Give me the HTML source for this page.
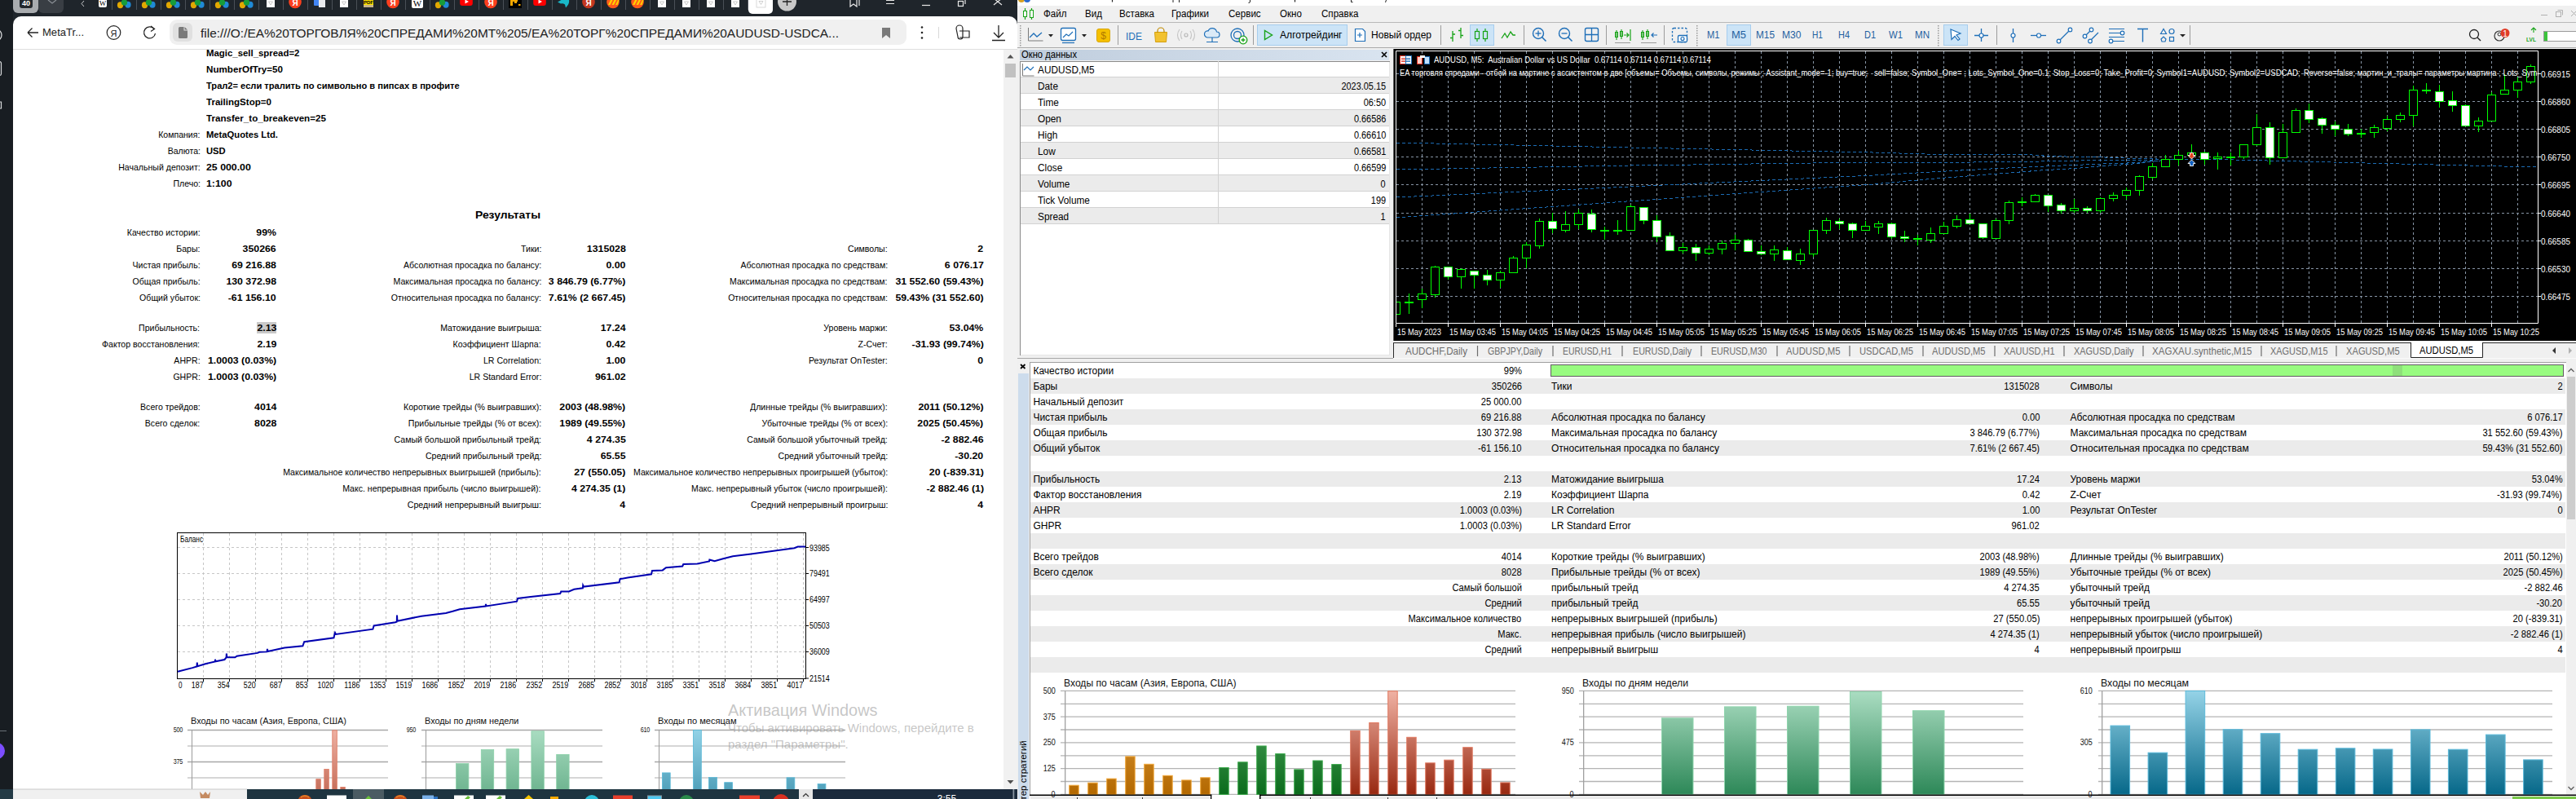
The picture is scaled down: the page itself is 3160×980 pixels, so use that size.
<!DOCTYPE html>
<html><head><meta charset="utf-8"><title>MetaTrader report</title>
<style>
html,body{margin:0;padding:0;}
body{width:3160px;height:980px;overflow:hidden;position:relative;background:#1f252b;font-family:"Liberation Sans",sans-serif;}
.t{position:absolute;white-space:pre;}
.r{position:absolute;}
svg{position:absolute;overflow:visible;}
</style></head><body>

<div class="r" style="left:0px;top:0px;width:16px;height:980px;background:#181d22;"></div>
<svg style="left:0;top:0" width="16" height="980"><circle cx="-5" cy="43" r="7" fill="none" stroke="#d8dadc" stroke-width="1.3"/><rect x="-9" y="75.5" width="10.5" height="17" rx="2" fill="none" stroke="#d8dadc" stroke-width="1.2"/><path d="M-4 116 v17 M-4 125 h5.5 v8 h-5.5" fill="none" stroke="#d8dadc" stroke-width="1.2"/><line x1="0" y1="896.5" x2="8" y2="896.5" stroke="#6a7077" stroke-width="1"/><circle cx="-4" cy="921" r="10" fill="#7b4dff"/></svg>
<svg style="left:0;top:0" width="1250" height="20"><rect x="16" y="-6" width="31" height="22" rx="6" fill="#a9acaf"/><rect x="24" y="-4" width="16" height="14" rx="3" fill="#23282d"/><text x="32" y="7" font-size="9" fill="#fff" text-anchor="middle" font-family="Liberation Sans" font-weight="bold">40</text><rect x="47" y="-6" width="31" height="22" rx="6" fill="#393e44"/><path d="M59 0 l5 4 l5 -4" fill="none" stroke="#8a8f95" stroke-width="1.2"/><path d="M103 1 l-3 3.5 l3 3.5" fill="none" stroke="#c8cacc" stroke-width="1"/><line x1="137.5" y1="0" x2="137.5" y2="12" stroke="#4a5057" stroke-width="1"/><line x1="167.5" y1="0" x2="167.5" y2="12" stroke="#4a5057" stroke-width="1"/><line x1="197.5" y1="0" x2="197.5" y2="12" stroke="#4a5057" stroke-width="1"/><line x1="227.5" y1="0" x2="227.5" y2="12" stroke="#4a5057" stroke-width="1"/><line x1="257.5" y1="0" x2="257.5" y2="12" stroke="#4a5057" stroke-width="1"/><line x1="287.5" y1="0" x2="287.5" y2="12" stroke="#4a5057" stroke-width="1"/><line x1="317.5" y1="0" x2="317.5" y2="12" stroke="#4a5057" stroke-width="1"/><line x1="347.5" y1="0" x2="347.5" y2="12" stroke="#4a5057" stroke-width="1"/><line x1="377.5" y1="0" x2="377.5" y2="12" stroke="#4a5057" stroke-width="1"/><line x1="407.5" y1="0" x2="407.5" y2="12" stroke="#4a5057" stroke-width="1"/><line x1="437.5" y1="0" x2="437.5" y2="12" stroke="#4a5057" stroke-width="1"/><line x1="467.5" y1="0" x2="467.5" y2="12" stroke="#4a5057" stroke-width="1"/><line x1="497.5" y1="0" x2="497.5" y2="12" stroke="#4a5057" stroke-width="1"/><line x1="527.5" y1="0" x2="527.5" y2="12" stroke="#4a5057" stroke-width="1"/><line x1="557.5" y1="0" x2="557.5" y2="12" stroke="#4a5057" stroke-width="1"/><line x1="587.5" y1="0" x2="587.5" y2="12" stroke="#4a5057" stroke-width="1"/><line x1="617.5" y1="0" x2="617.5" y2="12" stroke="#4a5057" stroke-width="1"/><line x1="647.5" y1="0" x2="647.5" y2="12" stroke="#4a5057" stroke-width="1"/><line x1="677.5" y1="0" x2="677.5" y2="12" stroke="#4a5057" stroke-width="1"/><line x1="707.5" y1="0" x2="707.5" y2="12" stroke="#4a5057" stroke-width="1"/><line x1="737.5" y1="0" x2="737.5" y2="12" stroke="#4a5057" stroke-width="1"/><line x1="767.5" y1="0" x2="767.5" y2="12" stroke="#4a5057" stroke-width="1"/><line x1="797.5" y1="0" x2="797.5" y2="12" stroke="#4a5057" stroke-width="1"/><line x1="827.5" y1="0" x2="827.5" y2="12" stroke="#4a5057" stroke-width="1"/><line x1="857.5" y1="0" x2="857.5" y2="12" stroke="#4a5057" stroke-width="1"/><line x1="887.5" y1="0" x2="887.5" y2="12" stroke="#4a5057" stroke-width="1"/><line x1="917.5" y1="0" x2="917.5" y2="12" stroke="#4a5057" stroke-width="1"/><rect x="121" y="-3" width="10" height="12" rx="2" fill="#fff"/><text x="126" y="7" font-size="9" fill="#000" text-anchor="middle" font-family="Liberation Serif">W</text><ellipse cx="147.5" cy="6.3" rx="3.6" ry="4" fill="#e2a800"/><ellipse cx="157" cy="5.8" rx="3.6" ry="4" fill="#1f8ad6"/><circle cx="152.5" cy="3" r="3.7" fill="#179c3a"/><ellipse cx="177.5" cy="6.3" rx="3.6" ry="4" fill="#e2a800"/><ellipse cx="187" cy="5.8" rx="3.6" ry="4" fill="#1f8ad6"/><circle cx="182.5" cy="3" r="3.7" fill="#179c3a"/><ellipse cx="207.5" cy="6.3" rx="3.6" ry="4" fill="#e2a800"/><ellipse cx="217" cy="5.8" rx="3.6" ry="4" fill="#1f8ad6"/><circle cx="212.5" cy="3" r="3.7" fill="#179c3a"/><ellipse cx="237.5" cy="6.3" rx="3.6" ry="4" fill="#e2a800"/><ellipse cx="247" cy="5.8" rx="3.6" ry="4" fill="#1f8ad6"/><circle cx="242.5" cy="3" r="3.7" fill="#179c3a"/><ellipse cx="267.5" cy="6.3" rx="3.6" ry="4" fill="#e2a800"/><ellipse cx="277" cy="5.8" rx="3.6" ry="4" fill="#1f8ad6"/><circle cx="272.5" cy="3" r="3.7" fill="#179c3a"/><ellipse cx="297.5" cy="6.3" rx="3.6" ry="4" fill="#e2a800"/><ellipse cx="307" cy="5.8" rx="3.6" ry="4" fill="#1f8ad6"/><circle cx="302.5" cy="3" r="3.7" fill="#179c3a"/><rect x="327" y="-2" width="10" height="11" fill="#fff"/><path d="M329.5 2 l2.5 4 l2.5 -4 z" fill="none" stroke="#bbb" stroke-width="0.8"/><circle cx="362" cy="2.5" r="7.8" fill="#fc3f1d" opacity="1"/><text x="362" y="7" font-size="10" fill="#fff" text-anchor="middle" font-family="Liberation Sans" font-weight="bold">Я</text><rect x="385" y="-3" width="9" height="10" rx="1" fill="#4285f4"/><rect x="391" y="0" width="8" height="9" fill="#e8eaed"/><rect x="417" y="-2" width="10" height="11" fill="#fff"/><path d="M419.5 2 l2.5 4 l2.5 -4 z" fill="none" stroke="#bbb" stroke-width="0.8"/><rect x="446" y="-2" width="12" height="10" fill="#ffe100"/><rect x="446" y="6" width="12" height="3" fill="#c9b68a"/><text x="452" y="5" font-size="6" fill="#000" text-anchor="middle" font-family="Liberation Sans" font-weight="bold">PDF</text><circle cx="482" cy="2.5" r="7.8" fill="#fc3f1d" opacity="1"/><text x="482" y="7" font-size="10" fill="#fff" text-anchor="middle" font-family="Liberation Sans" font-weight="bold">Я</text><rect x="505" y="-3" width="14" height="13" rx="2" fill="#fff"/><text x="512" y="7.5" font-size="11" fill="#000" text-anchor="middle" font-family="Liberation Serif">W</text><ellipse cx="537.5" cy="6.3" rx="3.6" ry="4" fill="#e2a800"/><ellipse cx="547" cy="5.8" rx="3.6" ry="4" fill="#1f8ad6"/><circle cx="542.5" cy="3" r="3.7" fill="#179c3a"/><rect x="564.2" y="-4" width="15.6" height="11" rx="3" fill="#f00"/><path d="M570.5 -0.5 l4.5 2.5 l-4.5 2.5 z" fill="#fff"/><circle cx="602" cy="2.5" r="7.8" fill="#fc3f1d" opacity="1"/><text x="602" y="7" font-size="10" fill="#fff" text-anchor="middle" font-family="Liberation Sans" font-weight="bold">Я</text><rect x="624" y="-3" width="16" height="13" fill="#000"/><path d="M626 7 v-9 h9 v4 h-1 v2 h-3 v-2 h-2 v5 z" fill="#f5a800"/><rect x="636" y="5" width="2.5" height="2" fill="#f5a800"/><rect x="654.2" y="-4" width="15.6" height="11" rx="3" fill="#f00"/><path d="M660.5 -0.5 l4.5 2.5 l-4.5 2.5 z" fill="#fff"/><path d="M684 2.5 q5 -3 8 -4 q4 -4 8 -2 l-2 4 q1 4 -4 9 l-1 -4 q-3 -2 -5 -1 z" fill="#19b8c9"/><circle cx="722" cy="2.5" r="7.8" fill="#fc3f1d" opacity="0.75"/><text x="722" y="7" font-size="10" fill="#fff" text-anchor="middle" font-family="Liberation Sans" font-weight="bold">Я</text><circle cx="752" cy="2.5" r="7.8" fill="#ff5a1a"/><path d="M746 6 l4 -8 h2.5 l-4 8 z M750.5 6 l4 -8 h2.5 l-4 8 z M755 6 l3 -6 h1.5 l-2 6 z" fill="#ffd200"/><circle cx="782" cy="2.5" r="7.8" fill="#ff5a1a"/><path d="M776 6 l4 -8 h2.5 l-4 8 z M780.5 6 l4 -8 h2.5 l-4 8 z M785 6 l3 -6 h1.5 l-2 6 z" fill="#ffd200"/><rect x="807" y="-2" width="10" height="11" fill="#fff"/><path d="M809.5 2 l2.5 4 l2.5 -4 z" fill="none" stroke="#bbb" stroke-width="0.8"/><rect x="837" y="-2" width="10" height="11" fill="#fff"/><path d="M839.5 2 l2.5 4 l2.5 -4 z" fill="none" stroke="#bbb" stroke-width="0.8"/><rect x="867" y="-2" width="10" height="11" fill="#fff"/><path d="M869.5 2 l2.5 4 l2.5 -4 z" fill="none" stroke="#bbb" stroke-width="0.8"/><rect x="897" y="-2" width="10" height="11" fill="#fff"/><path d="M899.5 2 l2.5 4 l2.5 -4 z" fill="none" stroke="#bbb" stroke-width="0.8"/><path d="M918 -2 h30 v14 a5 5 0 0 1 -5 5 h-20 a5 5 0 0 1 -5 -5 z" fill="#fff"/><rect x="928" y="-2" width="11" height="11" fill="none" stroke="#d0d0d0" stroke-width="0.8"/><path d="M931 1.5 l2.5 4 l2.5 -4 z" fill="none" stroke="#c4c4c4" stroke-width="0.8"/><circle cx="965.5" cy="2" r="11.5" fill="#c8c8c8"/><path d="M960 2 h11 M965.5 -3 v10" stroke="#222" stroke-width="1.3"/><path d="M1043 -1 v9 l4 -3 l4 3 v-9 M1051 -1 h3 v8" fill="none" stroke="#e8e8e8" stroke-width="1.2"/><path d="M1087 0.5 h10 M1087 4.5 h10" stroke="#e8e8e8" stroke-width="1.2"/><path d="M1131 6.5 h10" stroke="#e8e8e8" stroke-width="1.2"/><rect x="1175.5" y="1.5" width="6" height="6" fill="none" stroke="#e8e8e8" stroke-width="1.2"/><path d="M1178 -1 h6 v6" fill="none" stroke="#e8e8e8" stroke-width="1.2"/><path d="M1219 -2 l10 8 M1229 -2 l-10 8" stroke="#e8e8e8" stroke-width="1.2"/></svg>
<div class="r" style="left:16px;top:20px;width:1232px;height:948px;background:#fff;border-radius:10px 10px 0 0;"></div>
<div class="r" style="left:16px;top:60px;width:1232px;height:1px;background:#dedede;"></div>
<svg style="left:0;top:20" width="1250" height="40"><path d="M34 20 h13 M34 20 l5.5 -5.5 M34 20 l5.5 5.5" fill="none" stroke="#222" stroke-width="1.3"/><circle cx="139.5" cy="20" r="8.3" fill="none" stroke="#222" stroke-width="1.2"/><text x="139.5" y="24.5" font-size="11" fill="#222" text-anchor="middle" font-family="Liberation Sans">Я</text><path d="M189 15.5 A7 7 0 1 0 190.5 21" fill="none" stroke="#222" stroke-width="1.3"/><path d="M185 12 l4.5 3.5 l-4.5 3" fill="none" stroke="#222" stroke-width="1.3"/><rect x="208" y="4" width="904" height="31" rx="9" fill="#f0f0f0"/><rect x="212" y="8" width="24" height="23" rx="6" fill="#e0e0e0"/><path d="M220.5 13 h5 v4.5 h4.5 v8 a1.5 1.5 0 0 1 -1.5 1.5 h-8 a1.5 1.5 0 0 1 -1.5 -1.5 v-11 a1.5 1.5 0 0 1 1.5 -1.5 z M226.5 13 l3.5 3.5 h-3.5 z" fill="#7a7a7a"/><path d="M1082 14 h10 v13 l-5 -4 l-5 4 z" fill="#7a7a7a"/><circle cx="1131" cy="13.5" r="1.3" fill="#222"/><circle cx="1131" cy="20" r="1.3" fill="#222"/><circle cx="1131" cy="26.5" r="1.3" fill="#222"/><line x1="1151.5" y1="13" x2="1151.5" y2="27" stroke="#d8d8d8"/><path d="M1173 15 a4 4 0 0 1 8 0 v10 a3 3 0 0 1 -6 0 z M1177 18 h12 v8 h-12" fill="none" stroke="#222" stroke-width="1.2"/><path d="M1225 11 v15 M1219 20 l6 6 l6 -6 M1217 29.5 h16" fill="none" stroke="#222" stroke-width="1.3"/></svg>
<div class="t" style="font-size:13px;line-height:18px;top:31.0px;color:#222;left:52.0px;transform:scaleX(1.0040);transform-origin:0 50%;">MetaTr...</div>
<div class="t" style="font-size:15px;line-height:21px;top:29.5px;color:#222;left:246.0px;transform:scaleX(1.0281);transform-origin:0 50%;">file:///O:/EA%20ТОРГОВЛЯ%20СПРЕДАМИ%20МТ%205/EA%20ТОРГ%20СПРЕДАМИ%20AUDUSD-USDCA...</div>
<div class="t" style="font-size:11px;line-height:16px;top:57.0px;color:#000;font-weight:bold;left:253.0px;transform:scaleX(1.0366);transform-origin:0 50%;">Magic_sell_spread=2</div>
<div class="t" style="font-size:11px;line-height:16px;top:77.0px;color:#000;font-weight:bold;left:253.0px;transform:scaleX(1.0566);transform-origin:0 50%;">NumberOfTry=50</div>
<div class="t" style="font-size:11px;line-height:16px;top:97.0px;color:#000;font-weight:bold;left:253.0px;transform:scaleX(1.0095);transform-origin:0 50%;">Трал2= если тралить по символьно в пипсах в профите</div>
<div class="t" style="font-size:11px;line-height:16px;top:117.0px;color:#000;font-weight:bold;left:253.0px;transform:scaleX(1.0509);transform-origin:0 50%;">TrailingStop=0</div>
<div class="t" style="font-size:11px;line-height:16px;top:137.0px;color:#000;font-weight:bold;left:253.0px;transform:scaleX(1.0561);transform-origin:0 50%;">Transfer_to_breakeven=25</div>
<div class="t" style="font-size:11px;line-height:16px;top:157.0px;color:#000;right:2914.5px;transform:scaleX(0.9600);transform-origin:100% 50%;">Компания:</div>
<div class="t" style="font-size:11px;line-height:16px;top:157.0px;color:#000;font-weight:bold;left:253.0px;transform:scaleX(1.0200);transform-origin:0 50%;">MetaQuotes Ltd.</div>
<div class="t" style="font-size:11px;line-height:16px;top:177.0px;color:#000;right:2914.5px;transform:scaleX(0.9600);transform-origin:100% 50%;">Валюта:</div>
<div class="t" style="font-size:11px;line-height:16px;top:177.0px;color:#000;font-weight:bold;left:253.0px;transform:scaleX(1.0200);transform-origin:0 50%;">USD</div>
<div class="t" style="font-size:11px;line-height:16px;top:197.0px;color:#000;right:2914.5px;transform:scaleX(0.9600);transform-origin:100% 50%;">Начальный депозит:</div>
<div class="t" style="font-size:11px;line-height:16px;top:197.0px;color:#000;font-weight:bold;left:253.0px;transform:scaleX(1.1200);transform-origin:0 50%;">25 000.00</div>
<div class="t" style="font-size:11px;line-height:16px;top:217.0px;color:#000;right:2914.5px;transform:scaleX(0.9600);transform-origin:100% 50%;">Плечо:</div>
<div class="t" style="font-size:11px;line-height:16px;top:217.0px;color:#000;font-weight:bold;left:253.0px;transform:scaleX(1.1200);transform-origin:0 50%;">1:100</div>
<div class="t" style="font-size:13px;line-height:18px;top:255.0px;color:#000;font-weight:bold;left:-377.0px;width:2000px;text-align:center;transform:scaleX(1.0673);">Результаты</div>
<div class="r" style="left:315px;top:395px;width:24px;height:14px;background:#c9c9c9;"></div>
<div class="t" style="font-size:11px;line-height:16px;top:277.0px;color:#000;right:2914.5px;transform:scaleX(0.9600);transform-origin:100% 50%;">Качество истории:</div>
<div class="t" style="font-size:11px;line-height:16px;top:277.0px;color:#000;font-weight:bold;right:2821.0px;transform:scaleX(1.1200);transform-origin:100% 50%;">99%</div>
<div class="t" style="font-size:11px;line-height:16px;top:297.0px;color:#000;right:2914.5px;transform:scaleX(0.9600);transform-origin:100% 50%;">Бары:</div>
<div class="t" style="font-size:11px;line-height:16px;top:297.0px;color:#000;font-weight:bold;right:2821.0px;transform:scaleX(1.1200);transform-origin:100% 50%;">350266</div>
<div class="t" style="font-size:11px;line-height:16px;top:297.0px;color:#000;right:2496.0px;transform:scaleX(0.9600);transform-origin:100% 50%;">Тики:</div>
<div class="t" style="font-size:11px;line-height:16px;top:297.0px;color:#000;font-weight:bold;right:2392.5px;transform:scaleX(1.1200);transform-origin:100% 50%;">1315028</div>
<div class="t" style="font-size:11px;line-height:16px;top:297.0px;color:#000;right:2071.0px;transform:scaleX(0.9600);transform-origin:100% 50%;">Символы:</div>
<div class="t" style="font-size:11px;line-height:16px;top:297.0px;color:#000;font-weight:bold;right:1953.5px;transform:scaleX(1.1200);transform-origin:100% 50%;">2</div>
<div class="t" style="font-size:11px;line-height:16px;top:317.0px;color:#000;right:2914.5px;transform:scaleX(0.9600);transform-origin:100% 50%;">Чистая прибыль:</div>
<div class="t" style="font-size:11px;line-height:16px;top:317.0px;color:#000;font-weight:bold;right:2821.0px;transform:scaleX(1.1200);transform-origin:100% 50%;">69 216.88</div>
<div class="t" style="font-size:11px;line-height:16px;top:317.0px;color:#000;right:2496.0px;transform:scaleX(0.9600);transform-origin:100% 50%;">Абсолютная просадка по балансу:</div>
<div class="t" style="font-size:11px;line-height:16px;top:317.0px;color:#000;font-weight:bold;right:2392.5px;transform:scaleX(1.1200);transform-origin:100% 50%;">0.00</div>
<div class="t" style="font-size:11px;line-height:16px;top:317.0px;color:#000;right:2071.0px;transform:scaleX(0.9600);transform-origin:100% 50%;">Абсолютная просадка по средствам:</div>
<div class="t" style="font-size:11px;line-height:16px;top:317.0px;color:#000;font-weight:bold;right:1953.5px;transform:scaleX(1.1200);transform-origin:100% 50%;">6 076.17</div>
<div class="t" style="font-size:11px;line-height:16px;top:337.0px;color:#000;right:2914.5px;transform:scaleX(0.9600);transform-origin:100% 50%;">Общая прибыль:</div>
<div class="t" style="font-size:11px;line-height:16px;top:337.0px;color:#000;font-weight:bold;right:2821.0px;transform:scaleX(1.1200);transform-origin:100% 50%;">130 372.98</div>
<div class="t" style="font-size:11px;line-height:16px;top:337.0px;color:#000;right:2496.0px;transform:scaleX(0.9600);transform-origin:100% 50%;">Максимальная просадка по балансу:</div>
<div class="t" style="font-size:11px;line-height:16px;top:337.0px;color:#000;font-weight:bold;right:2392.5px;transform:scaleX(1.1200);transform-origin:100% 50%;">3 846.79 (6.77%)</div>
<div class="t" style="font-size:11px;line-height:16px;top:337.0px;color:#000;right:2071.0px;transform:scaleX(0.9600);transform-origin:100% 50%;">Максимальная просадка по средствам:</div>
<div class="t" style="font-size:11px;line-height:16px;top:337.0px;color:#000;font-weight:bold;right:1953.5px;transform:scaleX(1.1200);transform-origin:100% 50%;">31 552.60 (59.43%)</div>
<div class="t" style="font-size:11px;line-height:16px;top:357.0px;color:#000;right:2914.5px;transform:scaleX(0.9600);transform-origin:100% 50%;">Общий убыток:</div>
<div class="t" style="font-size:11px;line-height:16px;top:357.0px;color:#000;font-weight:bold;right:2821.0px;transform:scaleX(1.1200);transform-origin:100% 50%;">-61 156.10</div>
<div class="t" style="font-size:11px;line-height:16px;top:357.0px;color:#000;right:2496.0px;transform:scaleX(0.9600);transform-origin:100% 50%;">Относительная просадка по балансу:</div>
<div class="t" style="font-size:11px;line-height:16px;top:357.0px;color:#000;font-weight:bold;right:2392.5px;transform:scaleX(1.1200);transform-origin:100% 50%;">7.61% (2 667.45)</div>
<div class="t" style="font-size:11px;line-height:16px;top:357.0px;color:#000;right:2071.0px;transform:scaleX(0.9600);transform-origin:100% 50%;">Относительная просадка по средствам:</div>
<div class="t" style="font-size:11px;line-height:16px;top:357.0px;color:#000;font-weight:bold;right:1953.5px;transform:scaleX(1.1200);transform-origin:100% 50%;">59.43% (31 552.60)</div>
<div class="t" style="font-size:11px;line-height:16px;top:394.0px;color:#000;right:2914.5px;transform:scaleX(0.9600);transform-origin:100% 50%;">Прибыльность:</div>
<div class="t" style="font-size:11px;line-height:16px;top:394.0px;color:#000;font-weight:bold;right:2821.0px;transform:scaleX(1.1200);transform-origin:100% 50%;">2.13</div>
<div class="t" style="font-size:11px;line-height:16px;top:394.0px;color:#000;right:2496.0px;transform:scaleX(0.9600);transform-origin:100% 50%;">Матожидание выигрыша:</div>
<div class="t" style="font-size:11px;line-height:16px;top:394.0px;color:#000;font-weight:bold;right:2392.5px;transform:scaleX(1.1200);transform-origin:100% 50%;">17.24</div>
<div class="t" style="font-size:11px;line-height:16px;top:394.0px;color:#000;right:2071.0px;transform:scaleX(0.9600);transform-origin:100% 50%;">Уровень маржи:</div>
<div class="t" style="font-size:11px;line-height:16px;top:394.0px;color:#000;font-weight:bold;right:1953.5px;transform:scaleX(1.1200);transform-origin:100% 50%;">53.04%</div>
<div class="t" style="font-size:11px;line-height:16px;top:414.0px;color:#000;right:2914.5px;transform:scaleX(0.9600);transform-origin:100% 50%;">Фактор восстановления:</div>
<div class="t" style="font-size:11px;line-height:16px;top:414.0px;color:#000;font-weight:bold;right:2821.0px;transform:scaleX(1.1200);transform-origin:100% 50%;">2.19</div>
<div class="t" style="font-size:11px;line-height:16px;top:414.0px;color:#000;right:2496.0px;transform:scaleX(0.9600);transform-origin:100% 50%;">Коэффициент Шарпа:</div>
<div class="t" style="font-size:11px;line-height:16px;top:414.0px;color:#000;font-weight:bold;right:2392.5px;transform:scaleX(1.1200);transform-origin:100% 50%;">0.42</div>
<div class="t" style="font-size:11px;line-height:16px;top:414.0px;color:#000;right:2071.0px;transform:scaleX(0.9600);transform-origin:100% 50%;">Z-Счет:</div>
<div class="t" style="font-size:11px;line-height:16px;top:414.0px;color:#000;font-weight:bold;right:1953.5px;transform:scaleX(1.1200);transform-origin:100% 50%;">-31.93 (99.74%)</div>
<div class="t" style="font-size:11px;line-height:16px;top:434.0px;color:#000;right:2914.5px;transform:scaleX(0.9600);transform-origin:100% 50%;">AHPR:</div>
<div class="t" style="font-size:11px;line-height:16px;top:434.0px;color:#000;font-weight:bold;right:2821.0px;transform:scaleX(1.1200);transform-origin:100% 50%;">1.0003 (0.03%)</div>
<div class="t" style="font-size:11px;line-height:16px;top:434.0px;color:#000;right:2496.0px;transform:scaleX(0.9600);transform-origin:100% 50%;">LR Correlation:</div>
<div class="t" style="font-size:11px;line-height:16px;top:434.0px;color:#000;font-weight:bold;right:2392.5px;transform:scaleX(1.1200);transform-origin:100% 50%;">1.00</div>
<div class="t" style="font-size:11px;line-height:16px;top:434.0px;color:#000;right:2071.0px;transform:scaleX(0.9600);transform-origin:100% 50%;">Результат OnTester:</div>
<div class="t" style="font-size:11px;line-height:16px;top:434.0px;color:#000;font-weight:bold;right:1953.5px;transform:scaleX(1.1200);transform-origin:100% 50%;">0</div>
<div class="t" style="font-size:11px;line-height:16px;top:454.0px;color:#000;right:2914.5px;transform:scaleX(0.9600);transform-origin:100% 50%;">GHPR:</div>
<div class="t" style="font-size:11px;line-height:16px;top:454.0px;color:#000;font-weight:bold;right:2821.0px;transform:scaleX(1.1200);transform-origin:100% 50%;">1.0003 (0.03%)</div>
<div class="t" style="font-size:11px;line-height:16px;top:454.0px;color:#000;right:2496.0px;transform:scaleX(0.9600);transform-origin:100% 50%;">LR Standard Error:</div>
<div class="t" style="font-size:11px;line-height:16px;top:454.0px;color:#000;font-weight:bold;right:2392.5px;transform:scaleX(1.1200);transform-origin:100% 50%;">961.02</div>
<div class="t" style="font-size:11px;line-height:16px;top:491.0px;color:#000;right:2914.5px;transform:scaleX(0.9600);transform-origin:100% 50%;">Всего трейдов:</div>
<div class="t" style="font-size:11px;line-height:16px;top:491.0px;color:#000;font-weight:bold;right:2821.0px;transform:scaleX(1.1200);transform-origin:100% 50%;">4014</div>
<div class="t" style="font-size:11px;line-height:16px;top:491.0px;color:#000;right:2496.0px;transform:scaleX(0.9600);transform-origin:100% 50%;">Короткие трейды (% выигравших):</div>
<div class="t" style="font-size:11px;line-height:16px;top:491.0px;color:#000;font-weight:bold;right:2392.5px;transform:scaleX(1.1200);transform-origin:100% 50%;">2003 (48.98%)</div>
<div class="t" style="font-size:11px;line-height:16px;top:491.0px;color:#000;right:2071.0px;transform:scaleX(0.9600);transform-origin:100% 50%;">Длинные трейды (% выигравших):</div>
<div class="t" style="font-size:11px;line-height:16px;top:491.0px;color:#000;font-weight:bold;right:1953.5px;transform:scaleX(1.1200);transform-origin:100% 50%;">2011 (50.12%)</div>
<div class="t" style="font-size:11px;line-height:16px;top:511.0px;color:#000;right:2914.5px;transform:scaleX(0.9600);transform-origin:100% 50%;">Всего сделок:</div>
<div class="t" style="font-size:11px;line-height:16px;top:511.0px;color:#000;font-weight:bold;right:2821.0px;transform:scaleX(1.1200);transform-origin:100% 50%;">8028</div>
<div class="t" style="font-size:11px;line-height:16px;top:511.0px;color:#000;right:2496.0px;transform:scaleX(0.9600);transform-origin:100% 50%;">Прибыльные трейды (% от всех):</div>
<div class="t" style="font-size:11px;line-height:16px;top:511.0px;color:#000;font-weight:bold;right:2392.5px;transform:scaleX(1.1200);transform-origin:100% 50%;">1989 (49.55%)</div>
<div class="t" style="font-size:11px;line-height:16px;top:511.0px;color:#000;right:2071.0px;transform:scaleX(0.9600);transform-origin:100% 50%;">Убыточные трейды (% от всех):</div>
<div class="t" style="font-size:11px;line-height:16px;top:511.0px;color:#000;font-weight:bold;right:1953.5px;transform:scaleX(1.1200);transform-origin:100% 50%;">2025 (50.45%)</div>
<div class="t" style="font-size:11px;line-height:16px;top:531.0px;color:#000;right:2496.0px;transform:scaleX(0.9600);transform-origin:100% 50%;">Самый большой прибыльный трейд:</div>
<div class="t" style="font-size:11px;line-height:16px;top:531.0px;color:#000;font-weight:bold;right:2392.5px;transform:scaleX(1.1200);transform-origin:100% 50%;">4 274.35</div>
<div class="t" style="font-size:11px;line-height:16px;top:531.0px;color:#000;right:2071.0px;transform:scaleX(0.9600);transform-origin:100% 50%;">Самый большой убыточный трейд:</div>
<div class="t" style="font-size:11px;line-height:16px;top:531.0px;color:#000;font-weight:bold;right:1953.5px;transform:scaleX(1.1200);transform-origin:100% 50%;">-2 882.46</div>
<div class="t" style="font-size:11px;line-height:16px;top:551.0px;color:#000;right:2496.0px;transform:scaleX(0.9600);transform-origin:100% 50%;">Средний прибыльный трейд:</div>
<div class="t" style="font-size:11px;line-height:16px;top:551.0px;color:#000;font-weight:bold;right:2392.5px;transform:scaleX(1.1200);transform-origin:100% 50%;">65.55</div>
<div class="t" style="font-size:11px;line-height:16px;top:551.0px;color:#000;right:2071.0px;transform:scaleX(0.9600);transform-origin:100% 50%;">Средний убыточный трейд:</div>
<div class="t" style="font-size:11px;line-height:16px;top:551.0px;color:#000;font-weight:bold;right:1953.5px;transform:scaleX(1.1200);transform-origin:100% 50%;">-30.20</div>
<div class="t" style="font-size:11px;line-height:16px;top:571.0px;color:#000;right:2496.0px;transform:scaleX(0.9600);transform-origin:100% 50%;">Максимальное количество непрерывных выигрышей (прибыль):</div>
<div class="t" style="font-size:11px;line-height:16px;top:571.0px;color:#000;font-weight:bold;right:2392.5px;transform:scaleX(1.1200);transform-origin:100% 50%;">27 (550.05)</div>
<div class="t" style="font-size:11px;line-height:16px;top:571.0px;color:#000;right:2071.0px;transform:scaleX(0.9600);transform-origin:100% 50%;">Максимальное количество непрерывных проигрышей (убыток):</div>
<div class="t" style="font-size:11px;line-height:16px;top:571.0px;color:#000;font-weight:bold;right:1953.5px;transform:scaleX(1.1200);transform-origin:100% 50%;">20 (-839.31)</div>
<div class="t" style="font-size:11px;line-height:16px;top:591.0px;color:#000;right:2496.0px;transform:scaleX(0.9600);transform-origin:100% 50%;">Макс. непрерывная прибыль (число выигрышей):</div>
<div class="t" style="font-size:11px;line-height:16px;top:591.0px;color:#000;font-weight:bold;right:2392.5px;transform:scaleX(1.1200);transform-origin:100% 50%;">4 274.35 (1)</div>
<div class="t" style="font-size:11px;line-height:16px;top:591.0px;color:#000;right:2071.0px;transform:scaleX(0.9600);transform-origin:100% 50%;">Макс. непрерывный убыток (число проигрышей):</div>
<div class="t" style="font-size:11px;line-height:16px;top:591.0px;color:#000;font-weight:bold;right:1953.5px;transform:scaleX(1.1200);transform-origin:100% 50%;">-2 882.46 (1)</div>
<div class="t" style="font-size:11px;line-height:16px;top:611.0px;color:#000;right:2496.0px;transform:scaleX(0.9600);transform-origin:100% 50%;">Средний непрерывный выигрыш:</div>
<div class="t" style="font-size:11px;line-height:16px;top:611.0px;color:#000;font-weight:bold;right:2392.5px;transform:scaleX(1.1200);transform-origin:100% 50%;">4</div>
<div class="t" style="font-size:11px;line-height:16px;top:611.0px;color:#000;right:2071.0px;transform:scaleX(0.9600);transform-origin:100% 50%;">Средний непрерывный проигрыш:</div>
<div class="t" style="font-size:11px;line-height:16px;top:611.0px;color:#000;font-weight:bold;right:1953.5px;transform:scaleX(1.1200);transform-origin:100% 50%;">4</div>
<svg style="left:0;top:0" width="1250" height="980"><rect x="217.5" y="653.5" width="771" height="179" fill="#fff" stroke="#000" stroke-width="1"/><line x1="249.5" y1="654" x2="249.5" y2="832" stroke="#c6c6c6" stroke-width="1" stroke-dasharray="3,3"/><line x1="249.5" y1="833" x2="249.5" y2="836" stroke="#000" stroke-width="1"/><line x1="281.5" y1="654" x2="281.5" y2="832" stroke="#c6c6c6" stroke-width="1" stroke-dasharray="3,3"/><line x1="281.5" y1="833" x2="281.5" y2="836" stroke="#000" stroke-width="1"/><line x1="313.5" y1="654" x2="313.5" y2="832" stroke="#c6c6c6" stroke-width="1" stroke-dasharray="3,3"/><line x1="313.5" y1="833" x2="313.5" y2="836" stroke="#000" stroke-width="1"/><line x1="345.5" y1="654" x2="345.5" y2="832" stroke="#c6c6c6" stroke-width="1" stroke-dasharray="3,3"/><line x1="345.5" y1="833" x2="345.5" y2="836" stroke="#000" stroke-width="1"/><line x1="377.5" y1="654" x2="377.5" y2="832" stroke="#c6c6c6" stroke-width="1" stroke-dasharray="3,3"/><line x1="377.5" y1="833" x2="377.5" y2="836" stroke="#000" stroke-width="1"/><line x1="409.5" y1="654" x2="409.5" y2="832" stroke="#c6c6c6" stroke-width="1" stroke-dasharray="3,3"/><line x1="409.5" y1="833" x2="409.5" y2="836" stroke="#000" stroke-width="1"/><line x1="441.5" y1="654" x2="441.5" y2="832" stroke="#c6c6c6" stroke-width="1" stroke-dasharray="3,3"/><line x1="441.5" y1="833" x2="441.5" y2="836" stroke="#000" stroke-width="1"/><line x1="473.5" y1="654" x2="473.5" y2="832" stroke="#c6c6c6" stroke-width="1" stroke-dasharray="3,3"/><line x1="473.5" y1="833" x2="473.5" y2="836" stroke="#000" stroke-width="1"/><line x1="505.5" y1="654" x2="505.5" y2="832" stroke="#c6c6c6" stroke-width="1" stroke-dasharray="3,3"/><line x1="505.5" y1="833" x2="505.5" y2="836" stroke="#000" stroke-width="1"/><line x1="537.5" y1="654" x2="537.5" y2="832" stroke="#c6c6c6" stroke-width="1" stroke-dasharray="3,3"/><line x1="537.5" y1="833" x2="537.5" y2="836" stroke="#000" stroke-width="1"/><line x1="569.5" y1="654" x2="569.5" y2="832" stroke="#c6c6c6" stroke-width="1" stroke-dasharray="3,3"/><line x1="569.5" y1="833" x2="569.5" y2="836" stroke="#000" stroke-width="1"/><line x1="601.5" y1="654" x2="601.5" y2="832" stroke="#c6c6c6" stroke-width="1" stroke-dasharray="3,3"/><line x1="601.5" y1="833" x2="601.5" y2="836" stroke="#000" stroke-width="1"/><line x1="633.5" y1="654" x2="633.5" y2="832" stroke="#c6c6c6" stroke-width="1" stroke-dasharray="3,3"/><line x1="633.5" y1="833" x2="633.5" y2="836" stroke="#000" stroke-width="1"/><line x1="665.5" y1="654" x2="665.5" y2="832" stroke="#c6c6c6" stroke-width="1" stroke-dasharray="3,3"/><line x1="665.5" y1="833" x2="665.5" y2="836" stroke="#000" stroke-width="1"/><line x1="697.5" y1="654" x2="697.5" y2="832" stroke="#c6c6c6" stroke-width="1" stroke-dasharray="3,3"/><line x1="697.5" y1="833" x2="697.5" y2="836" stroke="#000" stroke-width="1"/><line x1="729.5" y1="654" x2="729.5" y2="832" stroke="#c6c6c6" stroke-width="1" stroke-dasharray="3,3"/><line x1="729.5" y1="833" x2="729.5" y2="836" stroke="#000" stroke-width="1"/><line x1="761.5" y1="654" x2="761.5" y2="832" stroke="#c6c6c6" stroke-width="1" stroke-dasharray="3,3"/><line x1="761.5" y1="833" x2="761.5" y2="836" stroke="#000" stroke-width="1"/><line x1="793.5" y1="654" x2="793.5" y2="832" stroke="#c6c6c6" stroke-width="1" stroke-dasharray="3,3"/><line x1="793.5" y1="833" x2="793.5" y2="836" stroke="#000" stroke-width="1"/><line x1="825.5" y1="654" x2="825.5" y2="832" stroke="#c6c6c6" stroke-width="1" stroke-dasharray="3,3"/><line x1="825.5" y1="833" x2="825.5" y2="836" stroke="#000" stroke-width="1"/><line x1="857.5" y1="654" x2="857.5" y2="832" stroke="#c6c6c6" stroke-width="1" stroke-dasharray="3,3"/><line x1="857.5" y1="833" x2="857.5" y2="836" stroke="#000" stroke-width="1"/><line x1="889.5" y1="654" x2="889.5" y2="832" stroke="#c6c6c6" stroke-width="1" stroke-dasharray="3,3"/><line x1="889.5" y1="833" x2="889.5" y2="836" stroke="#000" stroke-width="1"/><line x1="921.5" y1="654" x2="921.5" y2="832" stroke="#c6c6c6" stroke-width="1" stroke-dasharray="3,3"/><line x1="921.5" y1="833" x2="921.5" y2="836" stroke="#000" stroke-width="1"/><line x1="953.5" y1="654" x2="953.5" y2="832" stroke="#c6c6c6" stroke-width="1" stroke-dasharray="3,3"/><line x1="953.5" y1="833" x2="953.5" y2="836" stroke="#000" stroke-width="1"/><line x1="985.5" y1="654" x2="985.5" y2="832" stroke="#c6c6c6" stroke-width="1" stroke-dasharray="3,3"/><line x1="985.5" y1="833" x2="985.5" y2="836" stroke="#000" stroke-width="1"/><line x1="218" y1="671.5" x2="988" y2="671.5" stroke="#c6c6c6" stroke-width="1" stroke-dasharray="3,3"/><line x1="218" y1="703.5" x2="988" y2="703.5" stroke="#c6c6c6" stroke-width="1" stroke-dasharray="3,3"/><line x1="218" y1="735.5" x2="988" y2="735.5" stroke="#c6c6c6" stroke-width="1" stroke-dasharray="3,3"/><line x1="218" y1="767.5" x2="988" y2="767.5" stroke="#c6c6c6" stroke-width="1" stroke-dasharray="3,3"/><line x1="218" y1="799.5" x2="988" y2="799.5" stroke="#c6c6c6" stroke-width="1" stroke-dasharray="3,3"/><line x1="989" y1="671.5" x2="992" y2="671.5" stroke="#000" stroke-width="1"/><line x1="989" y1="703.5" x2="992" y2="703.5" stroke="#000" stroke-width="1"/><line x1="989" y1="735.5" x2="992" y2="735.5" stroke="#000" stroke-width="1"/><line x1="989" y1="767.5" x2="992" y2="767.5" stroke="#000" stroke-width="1"/><line x1="989" y1="799.5" x2="992" y2="799.5" stroke="#000" stroke-width="1"/><line x1="989" y1="832" x2="992" y2="832" stroke="#000" stroke-width="1"/><polyline points="218,823.8 236,819.1 241.5,817.4 241.8,812.5 242.3,817.2 252,814.3 263.8,811.5 264,808.8 264.5,811.2 275.5,809 277.6,806.4 277.9,801.5 278.4,806.2 288.4,806.2 290.5,804.7 316,800.9 318.2,799.8 327.6,799.4 327.9,795.8 328.4,799 349,794.5 371.4,792.3 373.2,787.2 409.5,782.3 410.5,777.4 411,776 412,778 457.4,771.7 458.6,767.4 485,763.2 486.8,762.5 487,754.5 487.4,761.7 517,755.7 547,751.9 555.4,749.8 564,747.2 595.6,743.6 596,741 596.5,743.4 634,737.7 635.1,734 651,732 687.2,728 688.3,725.5 697.9,725.5 704.3,722.8 714.9,721.3 715.2,717.9 716,719.6 759.6,714.3 760.6,710.2 770,708.5 799,704.3 800,700 812.8,699.4 817,696.2 837.2,694.5 838.3,692 855.3,691.5 870,688.5 870.4,686.5 876.6,688.3 886.2,685.5 899,682.3 921.3,679.6 954.3,674.9 974.5,672.3 978.7,670.6 988,670.6" fill="none" stroke="#0000b0" stroke-width="2"/></svg>
<div class="t" style="font-size:10px;line-height:15px;top:654.0px;color:#000;left:221.0px;transform:scaleX(0.8228);transform-origin:0 50%;">Баланс</div>
<div class="t" style="font-size:10px;line-height:15px;top:832.5px;color:#000;left:218.5px;transform:scaleX(0.8090);transform-origin:0 50%;">0</div>
<div class="t" style="font-size:10px;line-height:15px;top:832.5px;color:#000;right:2910.5px;transform:scaleX(0.8900);transform-origin:100% 50%;">187</div>
<div class="t" style="font-size:10px;line-height:15px;top:832.5px;color:#000;right:2878.5px;transform:scaleX(0.8900);transform-origin:100% 50%;">354</div>
<div class="t" style="font-size:10px;line-height:15px;top:832.5px;color:#000;right:2846.5px;transform:scaleX(0.8900);transform-origin:100% 50%;">520</div>
<div class="t" style="font-size:10px;line-height:15px;top:832.5px;color:#000;right:2814.5px;transform:scaleX(0.8900);transform-origin:100% 50%;">687</div>
<div class="t" style="font-size:10px;line-height:15px;top:832.5px;color:#000;right:2782.5px;transform:scaleX(0.8900);transform-origin:100% 50%;">853</div>
<div class="t" style="font-size:10px;line-height:15px;top:832.5px;color:#000;right:2750.5px;transform:scaleX(0.8900);transform-origin:100% 50%;">1020</div>
<div class="t" style="font-size:10px;line-height:15px;top:832.5px;color:#000;right:2718.5px;transform:scaleX(0.8900);transform-origin:100% 50%;">1186</div>
<div class="t" style="font-size:10px;line-height:15px;top:832.5px;color:#000;right:2686.5px;transform:scaleX(0.8900);transform-origin:100% 50%;">1353</div>
<div class="t" style="font-size:10px;line-height:15px;top:832.5px;color:#000;right:2654.5px;transform:scaleX(0.8900);transform-origin:100% 50%;">1519</div>
<div class="t" style="font-size:10px;line-height:15px;top:832.5px;color:#000;right:2622.5px;transform:scaleX(0.8900);transform-origin:100% 50%;">1686</div>
<div class="t" style="font-size:10px;line-height:15px;top:832.5px;color:#000;right:2590.5px;transform:scaleX(0.8900);transform-origin:100% 50%;">1852</div>
<div class="t" style="font-size:10px;line-height:15px;top:832.5px;color:#000;right:2558.5px;transform:scaleX(0.8900);transform-origin:100% 50%;">2019</div>
<div class="t" style="font-size:10px;line-height:15px;top:832.5px;color:#000;right:2526.5px;transform:scaleX(0.8900);transform-origin:100% 50%;">2186</div>
<div class="t" style="font-size:10px;line-height:15px;top:832.5px;color:#000;right:2494.5px;transform:scaleX(0.8900);transform-origin:100% 50%;">2352</div>
<div class="t" style="font-size:10px;line-height:15px;top:832.5px;color:#000;right:2462.5px;transform:scaleX(0.8900);transform-origin:100% 50%;">2519</div>
<div class="t" style="font-size:10px;line-height:15px;top:832.5px;color:#000;right:2430.5px;transform:scaleX(0.8900);transform-origin:100% 50%;">2685</div>
<div class="t" style="font-size:10px;line-height:15px;top:832.5px;color:#000;right:2398.5px;transform:scaleX(0.8900);transform-origin:100% 50%;">2852</div>
<div class="t" style="font-size:10px;line-height:15px;top:832.5px;color:#000;right:2366.5px;transform:scaleX(0.8900);transform-origin:100% 50%;">3018</div>
<div class="t" style="font-size:10px;line-height:15px;top:832.5px;color:#000;right:2334.5px;transform:scaleX(0.8900);transform-origin:100% 50%;">3185</div>
<div class="t" style="font-size:10px;line-height:15px;top:832.5px;color:#000;right:2302.5px;transform:scaleX(0.8900);transform-origin:100% 50%;">3351</div>
<div class="t" style="font-size:10px;line-height:15px;top:832.5px;color:#000;right:2270.5px;transform:scaleX(0.8900);transform-origin:100% 50%;">3518</div>
<div class="t" style="font-size:10px;line-height:15px;top:832.5px;color:#000;right:2238.5px;transform:scaleX(0.8900);transform-origin:100% 50%;">3684</div>
<div class="t" style="font-size:10px;line-height:15px;top:832.5px;color:#000;right:2206.5px;transform:scaleX(0.8900);transform-origin:100% 50%;">3851</div>
<div class="t" style="font-size:10px;line-height:15px;top:832.5px;color:#000;right:2174.5px;transform:scaleX(0.8900);transform-origin:100% 50%;">4017</div>
<div class="t" style="font-size:10px;line-height:15px;top:664.5px;color:#000;left:993.0px;transform:scaleX(0.8881);transform-origin:0 50%;">93985</div>
<div class="t" style="font-size:10px;line-height:15px;top:696.0px;color:#000;left:993.0px;transform:scaleX(0.8881);transform-origin:0 50%;">79491</div>
<div class="t" style="font-size:10px;line-height:15px;top:728.0px;color:#000;left:993.0px;transform:scaleX(0.8881);transform-origin:0 50%;">64997</div>
<div class="t" style="font-size:10px;line-height:15px;top:760.0px;color:#000;left:993.0px;transform:scaleX(0.8881);transform-origin:0 50%;">50503</div>
<div class="t" style="font-size:10px;line-height:15px;top:792.0px;color:#000;left:993.0px;transform:scaleX(0.8881);transform-origin:0 50%;">36009</div>
<div class="t" style="font-size:10px;line-height:15px;top:824.5px;color:#000;left:993.0px;transform:scaleX(0.8881);transform-origin:0 50%;">21514</div>
<svg style="left:0;top:0" width="1250" height="980"><defs><linearGradient id="bo" gradientUnits="userSpaceOnUse" x1="0" y1="895.5" x2="0" y2="1051.5"><stop offset="0" stop-color="#e6a94c"/><stop offset="1" stop-color="#b56a00"/></linearGradient><linearGradient id="bg" gradientUnits="userSpaceOnUse" x1="0" y1="895.5" x2="0" y2="1051.5"><stop offset="0" stop-color="#5cae6a"/><stop offset="1" stop-color="#0b6b1c"/></linearGradient><linearGradient id="br" gradientUnits="userSpaceOnUse" x1="0" y1="895.5" x2="0" y2="1051.5"><stop offset="0" stop-color="#eeb0a2"/><stop offset="1" stop-color="#9a2a10"/></linearGradient><linearGradient id="bg2" gradientUnits="userSpaceOnUse" x1="0" y1="895.5" x2="0" y2="1051.5"><stop offset="0" stop-color="#a9dcc1"/><stop offset="1" stop-color="#2f8a5b"/></linearGradient><linearGradient id="bb" gradientUnits="userSpaceOnUse" x1="0" y1="895.5" x2="0" y2="1051.5"><stop offset="0" stop-color="#93d2e6"/><stop offset="1" stop-color="#086a8b"/></linearGradient></defs><line x1="230" y1="895.5" x2="476" y2="895.5" stroke="#a8a8a8" stroke-width="1.6"/><line x1="230" y1="915.0" x2="476" y2="915.0" stroke="#c8c8c8" stroke-width="1.6"/><line x1="230" y1="934.5" x2="476" y2="934.5" stroke="#a8a8a8" stroke-width="1.6"/><line x1="230" y1="954.0" x2="476" y2="954.0" stroke="#c8c8c8" stroke-width="1.6"/><line x1="230" y1="973.5" x2="476" y2="973.5" stroke="#a8a8a8" stroke-width="1.6"/><rect x="235" y="895.5" width="1" height="84.5" fill="#9a9a9a"/><rect x="237.8" y="1037.8" width="5.5" height="13.7" fill="url(#bo)" stroke="#f0a030" stroke-width="0.8"/><rect x="247.8" y="1034.0" width="5.5" height="17.5" fill="url(#bo)" stroke="#f0a030" stroke-width="0.8"/><rect x="257.8" y="1027.8" width="5.5" height="23.7" fill="url(#bo)" stroke="#f0a030" stroke-width="0.8"/><rect x="267.8" y="994.4" width="5.5" height="57.1" fill="url(#bo)" stroke="#f0a030" stroke-width="0.8"/><rect x="277.8" y="1005.9" width="5.5" height="45.6" fill="url(#bo)" stroke="#f0a030" stroke-width="0.8"/><rect x="287.8" y="1023.1" width="5.5" height="28.4" fill="url(#bo)" stroke="#f0a030" stroke-width="0.8"/><rect x="297.8" y="1030.0" width="5.5" height="21.5" fill="url(#bo)" stroke="#f0a030" stroke-width="0.8"/><rect x="307.8" y="1026.2" width="5.5" height="25.3" fill="url(#bo)" stroke="#f0a030" stroke-width="0.8"/><rect x="317.8" y="1011.3" width="5.5" height="40.2" fill="url(#bg)" stroke="#3aa04a" stroke-width="0.8"/><rect x="327.8" y="1002.8" width="5.5" height="48.7" fill="url(#bg)" stroke="#3aa04a" stroke-width="0.8"/><rect x="337.8" y="978.5" width="5.5" height="73.0" fill="url(#bg)" stroke="#3aa04a" stroke-width="0.8"/><rect x="347.8" y="990.3" width="5.5" height="61.2" fill="url(#bg)" stroke="#3aa04a" stroke-width="0.8"/><rect x="357.8" y="1014.1" width="5.5" height="37.4" fill="url(#bg)" stroke="#3aa04a" stroke-width="0.8"/><rect x="367.8" y="1000.6" width="5.5" height="50.9" fill="url(#bg)" stroke="#3aa04a" stroke-width="0.8"/><rect x="377.8" y="1006.3" width="5.5" height="45.2" fill="url(#bg)" stroke="#3aa04a" stroke-width="0.8"/><rect x="387.8" y="955.7" width="5.5" height="95.8" fill="url(#br)" stroke="#e07860" stroke-width="0.8"/><rect x="397.8" y="943.5" width="5.5" height="108.0" fill="url(#br)" stroke="#e07860" stroke-width="0.8"/><rect x="407.8" y="895.8" width="5.5" height="155.7" fill="url(#br)" stroke="#e07860" stroke-width="0.8"/><rect x="417.8" y="965.4" width="5.5" height="86.1" fill="url(#br)" stroke="#e07860" stroke-width="0.8"/><rect x="427.8" y="1004.1" width="5.5" height="47.4" fill="url(#br)" stroke="#e07860" stroke-width="0.8"/><rect x="437.8" y="999.7" width="5.5" height="51.8" fill="url(#br)" stroke="#e07860" stroke-width="0.8"/><rect x="447.8" y="980.7" width="5.5" height="70.8" fill="url(#br)" stroke="#e07860" stroke-width="0.8"/><rect x="457.8" y="1013.4" width="5.5" height="38.1" fill="url(#br)" stroke="#e07860" stroke-width="0.8"/><rect x="467.8" y="1033.7" width="5.5" height="17.8" fill="url(#br)" stroke="#e07860" stroke-width="0.8"/><line x1="517" y1="895.5" x2="739" y2="895.5" stroke="#a8a8a8" stroke-width="1.6"/><line x1="517" y1="915.0" x2="739" y2="915.0" stroke="#c8c8c8" stroke-width="1.6"/><line x1="517" y1="934.5" x2="739" y2="934.5" stroke="#a8a8a8" stroke-width="1.6"/><line x1="517" y1="954.0" x2="739" y2="954.0" stroke="#c8c8c8" stroke-width="1.6"/><line x1="517" y1="973.5" x2="739" y2="973.5" stroke="#a8a8a8" stroke-width="1.6"/><rect x="522" y="895.5" width="1" height="84.5" fill="#9a9a9a"/><rect x="559.5" y="936.6" width="15.4" height="114.9" fill="url(#bg2)" stroke="#8ad0a8" stroke-width="0.8"/><rect x="590.3" y="919.5" width="15.4" height="132.0" fill="url(#bg2)" stroke="#8ad0a8" stroke-width="0.8"/><rect x="621.1" y="918.7" width="15.4" height="132.8" fill="url(#bg2)" stroke="#8ad0a8" stroke-width="0.8"/><rect x="651.9" y="896.8" width="15.4" height="154.7" fill="url(#bg2)" stroke="#8ad0a8" stroke-width="0.8"/><rect x="682.7" y="925.4" width="15.4" height="126.1" fill="url(#bg2)" stroke="#8ad0a8" stroke-width="0.8"/><line x1="803" y1="895.5" x2="1037" y2="895.5" stroke="#a8a8a8" stroke-width="1.6"/><line x1="803" y1="915.0" x2="1037" y2="915.0" stroke="#c8c8c8" stroke-width="1.6"/><line x1="803" y1="934.5" x2="1037" y2="934.5" stroke="#a8a8a8" stroke-width="1.6"/><line x1="803" y1="954.0" x2="1037" y2="954.0" stroke="#c8c8c8" stroke-width="1.6"/><line x1="803" y1="973.5" x2="1037" y2="973.5" stroke="#a8a8a8" stroke-width="1.6"/><rect x="808" y="895.5" width="1" height="84.5" fill="#9a9a9a"/><rect x="812.4" y="947.9" width="9.8" height="103.6" fill="url(#bb)" stroke="#58b8d8" stroke-width="0.8"/><rect x="831.5" y="988.6" width="9.8" height="62.9" fill="url(#bb)" stroke="#58b8d8" stroke-width="0.8"/><rect x="850.5" y="895.5" width="9.8" height="156.0" fill="url(#bb)" stroke="#58b8d8" stroke-width="0.8"/><rect x="869.6" y="953.6" width="9.8" height="97.9" fill="url(#bb)" stroke="#58b8d8" stroke-width="0.8"/><rect x="888.7" y="959.7" width="9.8" height="91.8" fill="url(#bb)" stroke="#58b8d8" stroke-width="0.8"/><rect x="907.8" y="983.7" width="9.8" height="67.8" fill="url(#bb)" stroke="#58b8d8" stroke-width="0.8"/><rect x="926.8" y="981.9" width="9.8" height="69.6" fill="url(#bb)" stroke="#58b8d8" stroke-width="0.8"/><rect x="945.9" y="983.5" width="9.8" height="68.0" fill="url(#bb)" stroke="#58b8d8" stroke-width="0.8"/><rect x="965.0" y="953.8" width="9.8" height="97.7" fill="url(#bb)" stroke="#58b8d8" stroke-width="0.8"/><rect x="984.0" y="983.7" width="9.8" height="67.8" fill="url(#bb)" stroke="#58b8d8" stroke-width="0.8"/><rect x="1003.1" y="961.5" width="9.8" height="90.0" fill="url(#bb)" stroke="#58b8d8" stroke-width="0.8"/><rect x="1022.2" y="999.3" width="9.8" height="52.2" fill="url(#bb)" stroke="#58b8d8" stroke-width="0.8"/></svg>
<div class="t" style="font-size:11px;line-height:16px;top:876.0px;color:#111;left:234.4px;transform:scaleX(0.9945);transform-origin:0 50%;">Входы по часам (Азия, Европа, США)</div>
<div class="t" style="font-size:11px;line-height:16px;top:876.0px;color:#111;left:521.0px;transform:scaleX(0.9879);transform-origin:0 50%;">Входы по дням недели</div>
<div class="t" style="font-size:11px;line-height:16px;top:876.0px;color:#111;left:807.0px;transform:scaleX(1.0048);transform-origin:0 50%;">Входы по месяцам</div>
<div class="t" style="font-size:9px;line-height:13px;top:889.0px;color:#111;letter-spacing:-0.3px;right:2936.0px;transform:scaleX(0.8000);transform-origin:100% 50%;">500</div>
<div class="t" style="font-size:9px;line-height:13px;top:928.0px;color:#111;letter-spacing:-0.3px;right:2936.0px;transform:scaleX(0.8000);transform-origin:100% 50%;">375</div>
<div class="t" style="font-size:9px;line-height:13px;top:889.0px;color:#111;letter-spacing:-0.3px;right:2650.0px;transform:scaleX(0.8000);transform-origin:100% 50%;">950</div>
<div class="t" style="font-size:9px;line-height:13px;top:889.0px;color:#111;letter-spacing:-0.3px;right:2363.0px;transform:scaleX(0.8000);transform-origin:100% 50%;">610</div>
<div class="t" style="font-size:21px;line-height:29px;top:855.5px;color:rgba(150,150,150,0.55);left:893.0px;transform:scaleX(0.9482);transform-origin:0 50%;">Активация Windows</div>
<div class="t" style="font-size:14px;line-height:20px;top:883.0px;color:rgba(150,150,150,0.55);left:893.0px;transform:scaleX(1.0719);transform-origin:0 50%;">Чтобы активировать Windows, перейдите в</div>
<div class="t" style="font-size:14px;line-height:20px;top:903.0px;color:rgba(150,150,150,0.55);left:893.0px;transform:scaleX(1.0736);transform-origin:0 50%;">раздел &quot;Параметры&quot;.</div>
<div class="r" style="left:1231px;top:61px;width:17px;height:907px;background:#f1f1f1;"></div>
<div class="r" style="left:1233px;top:78px;width:13px;height:17px;background:#c1c1c1;"></div>
<svg style="left:0;top:0" width="1250" height="980"><path d="M1235.5 71.5 h8 l-4 -4.5 z" fill="#505050"/><path d="M1235.5 957 h8 l-4 4.5 z" fill="#505050"/></svg>
<svg style="left:0;top:967" width="1250" height="13"><rect x="0" y="1" width="16" height="12" fill="#243b46"/><rect x="16" y="1" width="287" height="12" fill="#f0f0f0"/><rect x="16" y="0.5" width="287" height="1" fill="#c9c9c9"/><path d="M246 12 l-1 -8 l4 4 l3 -4 l3 4 l3 -4 l-1 8 z" fill="#c48a60"/><rect x="303" y="1" width="677" height="12" fill="#1e3440"/><rect x="433" y="1" width="38" height="12" fill="#4b5b63"/><path d="M366 13 q2 -5 8 -5 q6 0 8 5 z" fill="#c8501c"/><path d="M369 11 q5 -4 10 0" fill="none" stroke="#f0a030" stroke-width="1"/><rect x="401" y="8.5" width="24" height="5" fill="#fff"/><path d="M448 13 l4 -4 l4 4 z" fill="#6bbf3a"/><path d="M483 13 q2 -5 8 -5 q6 0 8 5 z" fill="#c8501c"/><path d="M486 11 q5 -4 10 0" fill="none" stroke="#f0a030" stroke-width="1"/><rect x="518" y="8.5" width="14" height="5" fill="#7ab0e8"/><rect x="532" y="10" width="5" height="4" fill="#2a70c0"/><rect x="557" y="8.5" width="24" height="5" fill="#fff"/><path d="M570 13 l4 -4 l3 2 l-2 2 z" fill="#6bbf3a"/><rect x="596" y="8.5" width="24" height="5" fill="#fff"/><path d="M609 13 l4 -4 l3 2 l-2 2 z" fill="#6bbf3a"/><path d="M643 13 l5.5 -5 l5.5 5 z" fill="#f5c400"/><rect x="675" y="10" width="10" height="4" fill="#f5a800"/><circle cx="726" cy="17" r="9" fill="#2cc0d8"/><rect x="752" y="8.5" width="24" height="5" fill="#e8402c"/><rect x="794.5" y="9" width="17" height="5" fill="#4fc8f0" stroke="#8a949c"/><circle cx="842" cy="17" r="9" fill="#2a8a4a"/><rect x="907" y="8.5" width="25" height="5" fill="#e8402c"/><circle cx="958" cy="17" r="10" fill="#d83020"/><rect x="980" y="1" width="17" height="12" fill="#e6e6e6"/><path d="M985 10 l3.5 -3.5 l3.5 3.5" fill="none" stroke="#333" stroke-width="1.2"/><rect x="997" y="1" width="248" height="12" fill="#1b2a3c"/><rect x="1242.5" y="1" width="2" height="12" fill="#8a96a2"/><rect x="1244.5" y="1" width="3.5" height="12" fill="#1b2a3c"/><text x="1161.5" y="16.5" font-size="12" fill="#fff" text-anchor="middle" font-family="Liberation Sans">3:55</text></svg>
<div class="r" style="left:1248px;top:0px;width:1912px;height:980px;background:#f0f0f0;"></div>
<div class="r" style="left:1248px;top:0px;width:1912px;height:7px;background:#ffffff;"></div>
<svg style="left:0;top:0" width="3160" height="10"><circle cx="1253" cy="-1" r="4" fill="#d8a020"/><circle cx="1260" cy="-1" r="4" fill="#2a6ad0"/><path d="M1364.5 0 v2.5" stroke="#222" stroke-width="1.2"/><path d="M1439 0 v3 M1446.5 0 v3" stroke="#222" stroke-width="1"/><path d="M1533.5 0 v2 q0 1.5 -2 1.5" fill="none" stroke="#222" stroke-width="1"/><path d="M1588.5 0 v2.5" stroke="#222" stroke-width="1.2"/><path d="M1657.5 0 v2.5 h2" fill="none" stroke="#222" stroke-width="1"/><path d="M1700.5 0 l-1 3" fill="none" stroke="#222" stroke-width="1"/></svg>
<div class="r" style="left:1248px;top:27px;width:1912px;height:1px;background:#b9b9b9;"></div>
<div class="r" style="left:1248px;top:58px;width:1912px;height:1px;background:#a9a9a9;"></div>
<div class="t" style="font-size:12px;line-height:17px;top:8.5px;color:#000;left:1280.0px;transform:scaleX(0.9650);transform-origin:0 50%;">Файл</div>
<div class="t" style="font-size:12px;line-height:17px;top:8.5px;color:#000;left:1331.0px;transform:scaleX(0.9650);transform-origin:0 50%;">Вид</div>
<div class="t" style="font-size:12px;line-height:17px;top:8.5px;color:#000;left:1373.0px;transform:scaleX(0.9650);transform-origin:0 50%;">Вставка</div>
<div class="t" style="font-size:12px;line-height:17px;top:8.5px;color:#000;left:1437.0px;transform:scaleX(0.9650);transform-origin:0 50%;">Графики</div>
<div class="t" style="font-size:12px;line-height:17px;top:8.5px;color:#000;left:1507.0px;transform:scaleX(0.9650);transform-origin:0 50%;">Сервис</div>
<div class="t" style="font-size:12px;line-height:17px;top:8.5px;color:#000;left:1569.5px;transform:scaleX(0.9650);transform-origin:0 50%;">Окно</div>
<div class="t" style="font-size:12px;line-height:17px;top:8.5px;color:#000;left:1621.0px;transform:scaleX(0.9650);transform-origin:0 50%;">Справка</div>
<svg style="left:0;top:0" width="3160" height="30"><path d="M3117 18.5 h8" stroke="#b0b0b0" stroke-width="1"/><rect x="3135.5" y="14.5" width="6" height="6" fill="none" stroke="#b0b0b0"/><path d="M3137.5 12.5 h6 v6" fill="none" stroke="#b0b0b0"/><path d="M3154 13 l7 7 M3161 13 l-7 7" stroke="#b0b0b0" stroke-width="1"/></svg>
<svg style="left:0;top:0" width="3160" height="60"><path d="M1257.5 10 v14 M1265.5 10 v14" stroke="#17a317" stroke-width="1.2"/><rect x="1255.5" y="13.5" width="4" height="7" fill="#fff" stroke="#17a317"/><rect x="1263.5" y="12.5" width="4" height="9" fill="#fff" stroke="#17a317"/><rect x="1251" y="31" width="1.5" height="1.5" fill="#9a9a9a"/><rect x="1251" y="34" width="1.5" height="1.5" fill="#9a9a9a"/><rect x="1251" y="37" width="1.5" height="1.5" fill="#9a9a9a"/><rect x="1251" y="40" width="1.5" height="1.5" fill="#9a9a9a"/><rect x="1251" y="43" width="1.5" height="1.5" fill="#9a9a9a"/><rect x="1251" y="46" width="1.5" height="1.5" fill="#9a9a9a"/><rect x="1251" y="49" width="1.5" height="1.5" fill="#9a9a9a"/><rect x="1251" y="52" width="1.5" height="1.5" fill="#9a9a9a"/><rect x="1251" y="55" width="1.5" height="1.5" fill="#9a9a9a"/><path d="M1261.5 34 v16 h18" fill="none" stroke="#7a7a7a"/><path d="M1263 46 l5 -5 l4 4 l6 -5" fill="none" stroke="#1f6fb8" stroke-width="1.3"/><path d="M1286 42 h6 l-3 3.5 z" fill="#222"/><rect x="1301.5" y="34.5" width="18" height="15" rx="2" fill="#fff" stroke="#1f6fb8" stroke-width="1.3"/><path d="M1304 46 l4 -4 l3 2 l5 -5" fill="none" stroke="#1f6fb8" stroke-width="1.2"/><path d="M1303 52.5 h15" stroke="#1f6fb8" stroke-width="1.2"/><path d="M1327 42 h6 l-3 3.5 z" fill="#222"/><rect x="1345.5" y="35.5" width="16" height="16" rx="2.5" fill="#f5c000" stroke="#d9a600"/><text x="1353.5" y="48" font-size="12" fill="#b07a00" text-anchor="middle" font-family="Liberation Sans">$</text><line x1="1371.5" y1="31" x2="1371.5" y2="55" stroke="#9c9c9c" stroke-width="1"/><text x="1391" y="48.5" font-size="12" fill="#1f6fb8" text-anchor="middle" font-family="Liberation Sans">IDE</text><path d="M1416.5 39.5 h15 l-1 12 h-13 z" fill="#f2c230" stroke="#d4a010"/><path d="M1420 40 v-2 a4 4 0 0 1 8 0 v2" fill="none" stroke="#c08a00" stroke-width="1.2"/><circle cx="1455" cy="43" r="2" fill="none" stroke="#b8b8b8" stroke-width="1.2"/><path d="M1450 38 q-3 5 0 10 M1460 38 q3 5 0 10 M1447 36 q-5 7 0 14 M1463 36 q5 7 0 14" fill="none" stroke="#c4c4c4" stroke-width="1.1"/><path d="M1481 46 a4 4 0 0 1 1 -8 a5.5 5.5 0 0 1 10.5 1 a3.5 3.5 0 0 1 0 7 z" fill="#dbeaf7" stroke="#1f6fb8" stroke-width="1.2"/><path d="M1487 46 v5 M1480 51.5 h14" stroke="#1f6fb8" stroke-width="1.2"/><circle cx="1518" cy="43" r="8" fill="none" stroke="#1f6fb8" stroke-width="1.3"/><circle cx="1518" cy="43" r="4.5" fill="none" stroke="#1f6fb8" stroke-width="1.3"/><circle cx="1525" cy="49" r="4.8" fill="#fff" stroke="#17a317" stroke-width="1.3"/><path d="M1522.5 49 h5 M1525 46.5 v5" stroke="#17a317" stroke-width="1.3"/><line x1="1537.5" y1="31" x2="1537.5" y2="55" stroke="#9c9c9c" stroke-width="1"/><rect x="1542.5" y="30.5" width="110" height="25" fill="#cce4f7" stroke="#a6cdee"/><path d="M1551.5 37.5 v11 l9 -5.5 z" fill="none" stroke="#17a317" stroke-width="1.4"/><path d="M1662.5 35.5 h9 l3 3 v12 h-12 z" fill="#fff" stroke="#1f6fb8" stroke-width="1.2"/><path d="M1665 43 h6 M1668 40 v6" stroke="#1f6fb8" stroke-width="1.2"/><line x1="1767.5" y1="31" x2="1767.5" y2="55" stroke="#9c9c9c" stroke-width="1"/><path d="M1782 38 v13 M1779 46.5 h3 M1782 42 h3 M1792 34 v13 M1789 37.5 h3 M1792 43.5 h3" stroke="#17a317" stroke-width="1.3"/><rect x="1803.5" y="30.5" width="29" height="25" fill="#cce4f7" stroke="#a6cdee"/><path d="M1812 35 v16 M1822 35 v16" stroke="#17a317" stroke-width="1.2"/><rect x="1809.5" y="38.5" width="5" height="9" fill="#cce4f7" stroke="#17a317" stroke-width="1.2"/><rect x="1819.5" y="38.5" width="5" height="9" fill="#cce4f7" stroke="#17a317" stroke-width="1.2"/><path d="M1842 47 l4 -6 l3 5 l4 -7 l3 4 h3" fill="none" stroke="#17a317" stroke-width="1.3"/><line x1="1869.5" y1="31" x2="1869.5" y2="55" stroke="#9c9c9c" stroke-width="1"/><circle cx="1887" cy="41" r="6.5" fill="none" stroke="#1f6fb8" stroke-width="1.4"/><path d="M1891.5 45.5 l5 5" stroke="#1f6fb8" stroke-width="1.6"/><path d="M1883.5 41 h7" stroke="#1f6fb8" stroke-width="1.3"/><path d="M1887 37.5 v7" stroke="#1f6fb8" stroke-width="1.3"/><circle cx="1919" cy="41" r="6.5" fill="none" stroke="#1f6fb8" stroke-width="1.4"/><path d="M1923.5 45.5 l5 5" stroke="#1f6fb8" stroke-width="1.6"/><path d="M1915.5 41 h7" stroke="#1f6fb8" stroke-width="1.3"/><rect x="1944.5" y="34.5" width="16" height="16" rx="2" fill="none" stroke="#1f6fb8" stroke-width="1.4"/><path d="M1952.5 35 v15 M1945 42.5 h15" stroke="#1f6fb8" stroke-width="1.3"/><line x1="1970.5" y1="31" x2="1970.5" y2="55" stroke="#9c9c9c" stroke-width="1"/><path d="M1983 37 v12 M1989 36 v12" stroke="#17a317" stroke-width="1.1"/><rect x="1981.5" y="39.5" width="3" height="6" fill="none" stroke="#17a317"/><rect x="1987.5" y="38.5" width="3" height="6" fill="none" stroke="#17a317"/><path d="M1992 43 h6 M1995.5 40.5 l2.5 2.5 l-2.5 2.5 M2000 36 v14" fill="none" stroke="#17a317" stroke-width="1.2"/><path d="M1981 52.5 h19" stroke="#9a9a9a"/><path d="M2015 37 v12 M2021 36 v12" stroke="#17a317" stroke-width="1.1"/><rect x="2013.5" y="39.5" width="3" height="6" fill="none" stroke="#17a317"/><rect x="2019.5" y="38.5" width="3" height="6" fill="none" stroke="#17a317"/><path d="M2026 43 h7 M2028.5 40.5 l-2.5 2.5 l2.5 2.5" fill="none" stroke="#1f6fb8" stroke-width="1.2"/><path d="M2013 52.5 h19" stroke="#9a9a9a"/><line x1="2041.5" y1="31" x2="2041.5" y2="55" stroke="#9c9c9c" stroke-width="1"/><rect x="2051.5" y="34.5" width="18" height="17" rx="2" fill="none" stroke="#1f6fb8" stroke-width="1.3" stroke-dasharray="2.5,2"/><rect x="2058.5" y="43.5" width="11" height="8" rx="1.5" fill="#fff" stroke="#1f6fb8" stroke-width="1.3"/><circle cx="2064" cy="47.5" r="2" fill="none" stroke="#1f6fb8" stroke-width="1.2"/><rect x="2081" y="31" width="1.5" height="1.5" fill="#9a9a9a"/><rect x="2081" y="34" width="1.5" height="1.5" fill="#9a9a9a"/><rect x="2081" y="37" width="1.5" height="1.5" fill="#9a9a9a"/><rect x="2081" y="40" width="1.5" height="1.5" fill="#9a9a9a"/><rect x="2081" y="43" width="1.5" height="1.5" fill="#9a9a9a"/><rect x="2081" y="46" width="1.5" height="1.5" fill="#9a9a9a"/><rect x="2081" y="49" width="1.5" height="1.5" fill="#9a9a9a"/><rect x="2081" y="52" width="1.5" height="1.5" fill="#9a9a9a"/><rect x="2081" y="55" width="1.5" height="1.5" fill="#9a9a9a"/><rect x="2118.5" y="30.5" width="29" height="25" fill="#cce4f7" stroke="#a6cdee"/><rect x="2377" y="31" width="1.5" height="1.5" fill="#9a9a9a"/><rect x="2377" y="34" width="1.5" height="1.5" fill="#9a9a9a"/><rect x="2377" y="37" width="1.5" height="1.5" fill="#9a9a9a"/><rect x="2377" y="40" width="1.5" height="1.5" fill="#9a9a9a"/><rect x="2377" y="43" width="1.5" height="1.5" fill="#9a9a9a"/><rect x="2377" y="46" width="1.5" height="1.5" fill="#9a9a9a"/><rect x="2377" y="49" width="1.5" height="1.5" fill="#9a9a9a"/><rect x="2377" y="52" width="1.5" height="1.5" fill="#9a9a9a"/><rect x="2377" y="55" width="1.5" height="1.5" fill="#9a9a9a"/><rect x="2384.5" y="30.5" width="29" height="25" fill="#cce4f7" stroke="#a6cdee"/><path d="M2393 36 l12 5 l-5 2 l4 5 l-2 1.5 l-4 -5 l-4 4 z" fill="#fff" stroke="#1f6fb8" stroke-width="1.2"/><path d="M2430.5 35 v16 M2422 43.5 h17" stroke="#1f6fb8" stroke-width="1.3"/><circle cx="2430.5" cy="43.5" r="2.5" fill="#fff" stroke="#1f6fb8" stroke-width="1.2"/><line x1="2449.5" y1="31" x2="2449.5" y2="55" stroke="#9c9c9c" stroke-width="1"/><path d="M2469.5 35 v17" stroke="#1f6fb8" stroke-width="1.3"/><circle cx="2469.5" cy="43.5" r="2.5" fill="#fff" stroke="#1f6fb8" stroke-width="1.2"/><path d="M2491 43.5 h19" stroke="#1f6fb8" stroke-width="1.3"/><circle cx="2501" cy="43.5" r="2.5" fill="#fff" stroke="#1f6fb8" stroke-width="1.2"/><path d="M2525 51 l15 -15" stroke="#1f6fb8" stroke-width="1.3"/><circle cx="2525.5" cy="50.5" r="2.3" fill="#fff" stroke="#1f6fb8" stroke-width="1.2"/><circle cx="2539.5" cy="36.5" r="2.3" fill="#fff" stroke="#1f6fb8" stroke-width="1.2"/><path d="M2556 46 l9 -9 M2563 51 l11 -11" stroke="#1f6fb8" stroke-width="1.3"/><circle cx="2557.5" cy="44.5" r="2.3" fill="#fff" stroke="#1f6fb8" stroke-width="1.2"/><circle cx="2565.5" cy="36.5" r="2.3" fill="#fff" stroke="#1f6fb8" stroke-width="1.2"/><circle cx="2564" cy="50.5" r="2.3" fill="#fff" stroke="#1f6fb8" stroke-width="1.2"/><path d="M2587 35.5 h19 M2587 40.5 h19 M2587 45.5 h19 M2587 50.5 h19" stroke="#1f6fb8" stroke-width="1.2"/><circle cx="2603.5" cy="40.5" r="2.3" fill="#fff" stroke="#1f6fb8" stroke-width="1.2"/><circle cx="2589.5" cy="50.5" r="2.3" fill="#fff" stroke="#1f6fb8" stroke-width="1.2"/><path d="M2622 35.5 h13 M2628.5 35.5 v16" stroke="#1f6fb8" stroke-width="1.4"/><path d="M2650.5 41.5 l3.5 -6 l3.5 6 z" fill="none" stroke="#1f6fb8" stroke-width="1.2"/><circle cx="2664" cy="38.5" r="3" fill="none" stroke="#1f6fb8" stroke-width="1.2"/><path d="M2651 48 l3 -3 l3 3 l-1 3 h-4 z" fill="none" stroke="#1f6fb8" stroke-width="1.2"/><rect x="2661.5" y="45.5" width="5" height="5" fill="none" stroke="#1f6fb8" stroke-width="1.2"/><path d="M2674 42 h7 l-3.5 3.5 z" fill="#222"/><line x1="2686.5" y1="31" x2="2686.5" y2="55" stroke="#9c9c9c" stroke-width="1"/><circle cx="3035" cy="42" r="5.5" fill="none" stroke="#222" stroke-width="1.3"/><path d="M3039 46 l4 4" stroke="#222" stroke-width="1.5"/><circle cx="3066" cy="44" r="6" fill="none" stroke="#333" stroke-width="1.2"/><circle cx="3066" cy="42" r="2" fill="none" stroke="#333"/><circle cx="3073" cy="40.5" r="5.5" fill="#e03c28"/><text x="3073" y="44.5" font-size="10" fill="#fff" text-anchor="middle" font-family="Liberation Sans">1</text><path d="M3105 37 l3 -3 l3 3 M3108 34 v6" fill="none" stroke="#17a317" stroke-width="1.1"/><text x="3105" y="51" font-size="6.5" fill="#17a317" text-anchor="middle" font-family="Liberation Sans" font-weight="bold">LVL</text><rect x="3120.5" y="38.5" width="45" height="12" fill="#fff" stroke="#9a9a9a"/><rect x="3121" y="39" width="4" height="11" fill="#3cc43c"/></svg>
<div class="t" style="font-size:12px;line-height:17px;top:34.5px;color:#000;left:1569.5px;transform:scaleX(1.0097);transform-origin:0 50%;">Алготрейдинг</div>
<div class="t" style="font-size:12px;line-height:17px;top:34.5px;color:#000;left:1682.0px;transform:scaleX(1.0030);transform-origin:0 50%;">Новый ордер</div>
<div class="t" style="font-size:12px;line-height:17px;top:34.5px;color:#1e5fa0;left:2094.0px;transform:scaleX(0.9297);transform-origin:0 50%;">M1</div>
<div class="t" style="font-size:12px;line-height:17px;top:34.5px;color:#1e5fa0;left:2124.0px;transform:scaleX(1.0797);transform-origin:0 50%;">M5</div>
<div class="t" style="font-size:12px;line-height:17px;top:34.5px;color:#1e5fa0;left:2154.0px;transform:scaleX(0.9853);transform-origin:0 50%;">M15</div>
<div class="t" style="font-size:12px;line-height:17px;top:34.5px;color:#1e5fa0;left:2186.0px;transform:scaleX(1.0067);transform-origin:0 50%;">M30</div>
<div class="t" style="font-size:12px;line-height:17px;top:34.5px;color:#1e5fa0;left:2223.0px;transform:scaleX(0.8473);transform-origin:0 50%;">H1</div>
<div class="t" style="font-size:12px;line-height:17px;top:34.5px;color:#1e5fa0;left:2255.0px;transform:scaleX(0.9124);transform-origin:0 50%;">H4</div>
<div class="t" style="font-size:12px;line-height:17px;top:34.5px;color:#1e5fa0;left:2287.0px;transform:scaleX(0.9124);transform-origin:0 50%;">D1</div>
<div class="t" style="font-size:12px;line-height:17px;top:34.5px;color:#1e5fa0;left:2317.0px;transform:scaleX(0.9444);transform-origin:0 50%;">W1</div>
<div class="t" style="font-size:12px;line-height:17px;top:34.5px;color:#1e5fa0;left:2349.0px;transform:scaleX(0.9640);transform-origin:0 50%;">MN</div>
<div class="r" style="left:1250px;top:60px;width:458px;height:378px;background:#f0f0f0;"></div>
<div class="r" style="left:1251px;top:61px;width:453px;height:13px;background:linear-gradient(90deg,#bfcddd,#d9e4f0);"></div>
<div class="t" style="font-size:12px;line-height:17px;top:59.0px;color:#000;left:1253.0px;transform:scaleX(0.9347);transform-origin:0 50%;">Окно данных</div>
<svg style="left:0;top:0" width="1710" height="80"><path d="M1695 64 l6 6 M1701 64 l-6 6" stroke="#000" stroke-width="1.6"/></svg>
<div class="r" style="left:1251px;top:75px;width:454px;height:361px;background:#fff;box-shadow:inset 1px 1px 0 #8a8a8a, inset -1px -1px 0 #e6e6e6;"></div>
<div class="r" style="left:1252px;top:94px;width:452px;height:1px;background:#d2d2d2;"></div>
<div class="t" style="font-size:12px;line-height:17px;top:77.5px;color:#000;left:1273.0px;transform:scaleX(0.9850);transform-origin:0 50%;">AUDUSD,M5</div>
<div class="r" style="left:1252px;top:95px;width:452px;height:20px;background:#ebebeb;"></div>
<div class="r" style="left:1252px;top:114px;width:452px;height:1px;background:#d2d2d2;"></div>
<div class="t" style="font-size:12px;line-height:17px;top:97.5px;color:#000;left:1273.0px;transform:scaleX(0.9850);transform-origin:0 50%;">Date</div>
<div class="t" style="font-size:12px;line-height:17px;top:97.5px;color:#000;right:1460.0px;transform:scaleX(0.9100);transform-origin:100% 50%;">2023.05.15</div>
<div class="r" style="left:1252px;top:134px;width:452px;height:1px;background:#d2d2d2;"></div>
<div class="t" style="font-size:12px;line-height:17px;top:117.5px;color:#000;left:1273.0px;transform:scaleX(0.9850);transform-origin:0 50%;">Time</div>
<div class="t" style="font-size:12px;line-height:17px;top:117.5px;color:#000;right:1460.0px;transform:scaleX(0.9100);transform-origin:100% 50%;">06:50</div>
<div class="r" style="left:1252px;top:135px;width:452px;height:20px;background:#ebebeb;"></div>
<div class="r" style="left:1252px;top:154px;width:452px;height:1px;background:#d2d2d2;"></div>
<div class="t" style="font-size:12px;line-height:17px;top:137.5px;color:#000;left:1273.0px;transform:scaleX(0.9850);transform-origin:0 50%;">Open</div>
<div class="t" style="font-size:12px;line-height:17px;top:137.5px;color:#000;right:1460.0px;transform:scaleX(0.9100);transform-origin:100% 50%;">0.66586</div>
<div class="r" style="left:1252px;top:174px;width:452px;height:1px;background:#d2d2d2;"></div>
<div class="t" style="font-size:12px;line-height:17px;top:157.5px;color:#000;left:1273.0px;transform:scaleX(0.9850);transform-origin:0 50%;">High</div>
<div class="t" style="font-size:12px;line-height:17px;top:157.5px;color:#000;right:1460.0px;transform:scaleX(0.9100);transform-origin:100% 50%;">0.66610</div>
<div class="r" style="left:1252px;top:175px;width:452px;height:20px;background:#ebebeb;"></div>
<div class="r" style="left:1252px;top:194px;width:452px;height:1px;background:#d2d2d2;"></div>
<div class="t" style="font-size:12px;line-height:17px;top:177.5px;color:#000;left:1273.0px;transform:scaleX(0.9850);transform-origin:0 50%;">Low</div>
<div class="t" style="font-size:12px;line-height:17px;top:177.5px;color:#000;right:1460.0px;transform:scaleX(0.9100);transform-origin:100% 50%;">0.66581</div>
<div class="r" style="left:1252px;top:214px;width:452px;height:1px;background:#d2d2d2;"></div>
<div class="t" style="font-size:12px;line-height:17px;top:197.5px;color:#000;left:1273.0px;transform:scaleX(0.9850);transform-origin:0 50%;">Close</div>
<div class="t" style="font-size:12px;line-height:17px;top:197.5px;color:#000;right:1460.0px;transform:scaleX(0.9100);transform-origin:100% 50%;">0.66599</div>
<div class="r" style="left:1252px;top:215px;width:452px;height:20px;background:#ebebeb;"></div>
<div class="r" style="left:1252px;top:234px;width:452px;height:1px;background:#d2d2d2;"></div>
<div class="t" style="font-size:12px;line-height:17px;top:217.5px;color:#000;left:1273.0px;transform:scaleX(0.9850);transform-origin:0 50%;">Volume</div>
<div class="t" style="font-size:12px;line-height:17px;top:217.5px;color:#000;right:1460.0px;transform:scaleX(0.9100);transform-origin:100% 50%;">0</div>
<div class="r" style="left:1252px;top:254px;width:452px;height:1px;background:#d2d2d2;"></div>
<div class="t" style="font-size:12px;line-height:17px;top:237.5px;color:#000;left:1273.0px;transform:scaleX(0.9850);transform-origin:0 50%;">Tick Volume</div>
<div class="t" style="font-size:12px;line-height:17px;top:237.5px;color:#000;right:1460.0px;transform:scaleX(0.9100);transform-origin:100% 50%;">199</div>
<div class="r" style="left:1252px;top:255px;width:452px;height:20px;background:#ebebeb;"></div>
<div class="r" style="left:1252px;top:274px;width:452px;height:1px;background:#d2d2d2;"></div>
<div class="t" style="font-size:12px;line-height:17px;top:257.5px;color:#000;left:1273.0px;transform:scaleX(0.9850);transform-origin:0 50%;">Spread</div>
<div class="t" style="font-size:12px;line-height:17px;top:257.5px;color:#000;right:1460.0px;transform:scaleX(0.9100);transform-origin:100% 50%;">1</div>
<div class="r" style="left:1494px;top:75px;width:1px;height:200px;background:#d2d2d2;"></div>
<svg style="left:0;top:0" width="1710" height="100"><path d="M1254.5 78 v15 h14" fill="none" stroke="#7a7a7a"/><path d="M1256 86 l4 -4 l4 4 l4 -4" fill="none" stroke="#1f6fb8" stroke-width="1.2"/></svg>
<div class="r" style="left:1709px;top:60px;width:1451px;height:358px;background:#000;"></div>
<div class="r" style="left:1709px;top:60px;width:1px;height:358px;background:#5a5a5a;"></div>
<svg style="left:0;top:0" width="3160" height="420"><defs><clipPath id="plot"><rect x="1713" y="63" width="1400" height="333"/></clipPath></defs><line x1="1744.5" y1="63" x2="1744.5" y2="396" stroke="#8795a5" stroke-width="1" stroke-dasharray="3,3"/><line x1="1776.5" y1="63" x2="1776.5" y2="396" stroke="#8795a5" stroke-width="1" stroke-dasharray="3,3"/><line x1="1808.5" y1="63" x2="1808.5" y2="396" stroke="#8795a5" stroke-width="1" stroke-dasharray="3,3"/><line x1="1840.5" y1="63" x2="1840.5" y2="396" stroke="#8795a5" stroke-width="1" stroke-dasharray="3,3"/><line x1="1872.5" y1="63" x2="1872.5" y2="396" stroke="#8795a5" stroke-width="1" stroke-dasharray="3,3"/><line x1="1904.5" y1="63" x2="1904.5" y2="396" stroke="#8795a5" stroke-width="1" stroke-dasharray="3,3"/><line x1="1936.5" y1="63" x2="1936.5" y2="396" stroke="#8795a5" stroke-width="1" stroke-dasharray="3,3"/><line x1="1968.5" y1="63" x2="1968.5" y2="396" stroke="#8795a5" stroke-width="1" stroke-dasharray="3,3"/><line x1="2000.5" y1="63" x2="2000.5" y2="396" stroke="#8795a5" stroke-width="1" stroke-dasharray="3,3"/><line x1="2032.5" y1="63" x2="2032.5" y2="396" stroke="#8795a5" stroke-width="1" stroke-dasharray="3,3"/><line x1="2064.5" y1="63" x2="2064.5" y2="396" stroke="#8795a5" stroke-width="1" stroke-dasharray="3,3"/><line x1="2096.5" y1="63" x2="2096.5" y2="396" stroke="#8795a5" stroke-width="1" stroke-dasharray="3,3"/><line x1="2128.5" y1="63" x2="2128.5" y2="396" stroke="#8795a5" stroke-width="1" stroke-dasharray="3,3"/><line x1="2160.5" y1="63" x2="2160.5" y2="396" stroke="#8795a5" stroke-width="1" stroke-dasharray="3,3"/><line x1="2192.5" y1="63" x2="2192.5" y2="396" stroke="#8795a5" stroke-width="1" stroke-dasharray="3,3"/><line x1="2224.5" y1="63" x2="2224.5" y2="396" stroke="#8795a5" stroke-width="1" stroke-dasharray="3,3"/><line x1="2256.5" y1="63" x2="2256.5" y2="396" stroke="#8795a5" stroke-width="1" stroke-dasharray="3,3"/><line x1="2288.5" y1="63" x2="2288.5" y2="396" stroke="#8795a5" stroke-width="1" stroke-dasharray="3,3"/><line x1="2320.5" y1="63" x2="2320.5" y2="396" stroke="#8795a5" stroke-width="1" stroke-dasharray="3,3"/><line x1="2352.5" y1="63" x2="2352.5" y2="396" stroke="#8795a5" stroke-width="1" stroke-dasharray="3,3"/><line x1="2384.5" y1="63" x2="2384.5" y2="396" stroke="#8795a5" stroke-width="1" stroke-dasharray="3,3"/><line x1="2416.5" y1="63" x2="2416.5" y2="396" stroke="#8795a5" stroke-width="1" stroke-dasharray="3,3"/><line x1="2448.5" y1="63" x2="2448.5" y2="396" stroke="#8795a5" stroke-width="1" stroke-dasharray="3,3"/><line x1="2480.5" y1="63" x2="2480.5" y2="396" stroke="#8795a5" stroke-width="1" stroke-dasharray="3,3"/><line x1="2512.5" y1="63" x2="2512.5" y2="396" stroke="#8795a5" stroke-width="1" stroke-dasharray="3,3"/><line x1="2544.5" y1="63" x2="2544.5" y2="396" stroke="#8795a5" stroke-width="1" stroke-dasharray="3,3"/><line x1="2576.5" y1="63" x2="2576.5" y2="396" stroke="#8795a5" stroke-width="1" stroke-dasharray="3,3"/><line x1="2608.5" y1="63" x2="2608.5" y2="396" stroke="#8795a5" stroke-width="1" stroke-dasharray="3,3"/><line x1="2640.5" y1="63" x2="2640.5" y2="396" stroke="#8795a5" stroke-width="1" stroke-dasharray="3,3"/><line x1="2672.5" y1="63" x2="2672.5" y2="396" stroke="#8795a5" stroke-width="1" stroke-dasharray="3,3"/><line x1="2704.5" y1="63" x2="2704.5" y2="396" stroke="#8795a5" stroke-width="1" stroke-dasharray="3,3"/><line x1="2736.5" y1="63" x2="2736.5" y2="396" stroke="#8795a5" stroke-width="1" stroke-dasharray="3,3"/><line x1="2768.5" y1="63" x2="2768.5" y2="396" stroke="#8795a5" stroke-width="1" stroke-dasharray="3,3"/><line x1="2800.5" y1="63" x2="2800.5" y2="396" stroke="#8795a5" stroke-width="1" stroke-dasharray="3,3"/><line x1="2832.5" y1="63" x2="2832.5" y2="396" stroke="#8795a5" stroke-width="1" stroke-dasharray="3,3"/><line x1="2864.5" y1="63" x2="2864.5" y2="396" stroke="#8795a5" stroke-width="1" stroke-dasharray="3,3"/><line x1="2896.5" y1="63" x2="2896.5" y2="396" stroke="#8795a5" stroke-width="1" stroke-dasharray="3,3"/><line x1="2928.5" y1="63" x2="2928.5" y2="396" stroke="#8795a5" stroke-width="1" stroke-dasharray="3,3"/><line x1="2960.5" y1="63" x2="2960.5" y2="396" stroke="#8795a5" stroke-width="1" stroke-dasharray="3,3"/><line x1="2992.5" y1="63" x2="2992.5" y2="396" stroke="#8795a5" stroke-width="1" stroke-dasharray="3,3"/><line x1="3024.5" y1="63" x2="3024.5" y2="396" stroke="#8795a5" stroke-width="1" stroke-dasharray="3,3"/><line x1="3056.5" y1="63" x2="3056.5" y2="396" stroke="#8795a5" stroke-width="1" stroke-dasharray="3,3"/><line x1="3088.5" y1="63" x2="3088.5" y2="396" stroke="#8795a5" stroke-width="1" stroke-dasharray="3,3"/><line x1="1713" y1="90.5" x2="3113" y2="90.5" stroke="#8795a5" stroke-width="1" stroke-dasharray="3,3"/><line x1="3113" y1="90.5" x2="3117" y2="90.5" stroke="#fff" stroke-width="1"/><line x1="1713" y1="124.5" x2="3113" y2="124.5" stroke="#8795a5" stroke-width="1" stroke-dasharray="3,3"/><line x1="3113" y1="124.5" x2="3117" y2="124.5" stroke="#fff" stroke-width="1"/><line x1="1713" y1="158.5" x2="3113" y2="158.5" stroke="#8795a5" stroke-width="1" stroke-dasharray="3,3"/><line x1="3113" y1="158.5" x2="3117" y2="158.5" stroke="#fff" stroke-width="1"/><line x1="1713" y1="192.5" x2="3113" y2="192.5" stroke="#8795a5" stroke-width="1" stroke-dasharray="3,3"/><line x1="3113" y1="192.5" x2="3117" y2="192.5" stroke="#fff" stroke-width="1"/><line x1="1713" y1="226.5" x2="3113" y2="226.5" stroke="#8795a5" stroke-width="1" stroke-dasharray="3,3"/><line x1="3113" y1="226.5" x2="3117" y2="226.5" stroke="#fff" stroke-width="1"/><line x1="1713" y1="261.5" x2="3113" y2="261.5" stroke="#8795a5" stroke-width="1" stroke-dasharray="3,3"/><line x1="3113" y1="261.5" x2="3117" y2="261.5" stroke="#fff" stroke-width="1"/><line x1="1713" y1="295.5" x2="3113" y2="295.5" stroke="#8795a5" stroke-width="1" stroke-dasharray="3,3"/><line x1="3113" y1="295.5" x2="3117" y2="295.5" stroke="#fff" stroke-width="1"/><line x1="1713" y1="329.5" x2="3113" y2="329.5" stroke="#8795a5" stroke-width="1" stroke-dasharray="3,3"/><line x1="3113" y1="329.5" x2="3117" y2="329.5" stroke="#fff" stroke-width="1"/><line x1="1713" y1="363.5" x2="3113" y2="363.5" stroke="#8795a5" stroke-width="1" stroke-dasharray="3,3"/><line x1="3113" y1="363.5" x2="3117" y2="363.5" stroke="#fff" stroke-width="1"/><line x1="1712.5" y1="397" x2="1712.5" y2="401" stroke="#fff" stroke-width="1"/><line x1="1776.5" y1="397" x2="1776.5" y2="401" stroke="#fff" stroke-width="1"/><line x1="1840.5" y1="397" x2="1840.5" y2="401" stroke="#fff" stroke-width="1"/><line x1="1904.5" y1="397" x2="1904.5" y2="401" stroke="#fff" stroke-width="1"/><line x1="1968.5" y1="397" x2="1968.5" y2="401" stroke="#fff" stroke-width="1"/><line x1="2032.5" y1="397" x2="2032.5" y2="401" stroke="#fff" stroke-width="1"/><line x1="2096.5" y1="397" x2="2096.5" y2="401" stroke="#fff" stroke-width="1"/><line x1="2160.5" y1="397" x2="2160.5" y2="401" stroke="#fff" stroke-width="1"/><line x1="2224.5" y1="397" x2="2224.5" y2="401" stroke="#fff" stroke-width="1"/><line x1="2288.5" y1="397" x2="2288.5" y2="401" stroke="#fff" stroke-width="1"/><line x1="2352.5" y1="397" x2="2352.5" y2="401" stroke="#fff" stroke-width="1"/><line x1="2416.5" y1="397" x2="2416.5" y2="401" stroke="#fff" stroke-width="1"/><line x1="2480.5" y1="397" x2="2480.5" y2="401" stroke="#fff" stroke-width="1"/><line x1="2544.5" y1="397" x2="2544.5" y2="401" stroke="#fff" stroke-width="1"/><line x1="2608.5" y1="397" x2="2608.5" y2="401" stroke="#fff" stroke-width="1"/><line x1="2672.5" y1="397" x2="2672.5" y2="401" stroke="#fff" stroke-width="1"/><line x1="2736.5" y1="397" x2="2736.5" y2="401" stroke="#fff" stroke-width="1"/><line x1="2800.5" y1="397" x2="2800.5" y2="401" stroke="#fff" stroke-width="1"/><line x1="2864.5" y1="397" x2="2864.5" y2="401" stroke="#fff" stroke-width="1"/><line x1="2928.5" y1="397" x2="2928.5" y2="401" stroke="#fff" stroke-width="1"/><line x1="2992.5" y1="397" x2="2992.5" y2="401" stroke="#fff" stroke-width="1"/><line x1="3056.5" y1="397" x2="3056.5" y2="401" stroke="#fff" stroke-width="1"/><path d="M1712.5 396.5 V62.5 H3113.5 V396.5 Z" fill="none" stroke="#fff" stroke-width="1"/><polyline clip-path="url(#plot)" points="1713,175 2000,181 2297,187 2380,189.5 2480,189 2517,191.8 2566,192.4 2616,194.3 2666,195.5" fill="none" stroke="#1c6cb4" stroke-width="1" stroke-dasharray="4,3" shape-rendering="crispEdges"/><polyline clip-path="url(#plot)" points="1713,208 2000,203 2297,199 2380,199.5 2504,198 2566,196.7 2641,196 2666,195.5" fill="none" stroke="#1c6cb4" stroke-width="1" stroke-dasharray="4,3" shape-rendering="crispEdges"/><polyline clip-path="url(#plot)" points="1713,242 2000,229 2297,215 2380,210.4 2448,206.7 2517,203.6 2579,201 2616,199.8 2666,195.5" fill="none" stroke="#1c6cb4" stroke-width="1" stroke-dasharray="4,3" shape-rendering="crispEdges"/><polyline clip-path="url(#plot)" points="1713,267 2004,246.4 2297,226 2380,218.5 2448,213.3 2510,208.5 2544,206.7 2579,203.6 2616,201 2653,196.7 2666,195.5" fill="none" stroke="#1c6cb4" stroke-width="1" stroke-dasharray="4,3" shape-rendering="crispEdges"/><polyline clip-path="url(#plot)" points="2666,195.5 2700,195 2862,199 3113,205" fill="none" stroke="#1c6cb4" stroke-width="1" stroke-dasharray="4,3" shape-rendering="crispEdges"/><g clip-path="url(#plot)"><line x1="1712.5" y1="368" x2="1712.5" y2="396" stroke="#00ff00" stroke-width="1"/><rect x="1707.5" y="370.5" width="10" height="15" fill="#000" stroke="#00ff00" stroke-width="1"/><line x1="1728.5" y1="360" x2="1728.5" y2="385" stroke="#00ff00" stroke-width="1"/><rect x="1723" y="370" width="11" height="2" fill="#00ff00"/><line x1="1744.5" y1="354" x2="1744.5" y2="378" stroke="#00ff00" stroke-width="1"/><rect x="1739.5" y="360.5" width="10" height="7" fill="#000" stroke="#00ff00" stroke-width="1"/><line x1="1760.5" y1="326" x2="1760.5" y2="365" stroke="#00ff00" stroke-width="1"/><rect x="1755.5" y="327.5" width="10" height="34" fill="#000" stroke="#00ff00" stroke-width="1"/><line x1="1776.5" y1="327" x2="1776.5" y2="343" stroke="#00ff00" stroke-width="1"/><rect x="1771.5" y="327.5" width="10" height="12" fill="#fff" stroke="#00ff00" stroke-width="1"/><line x1="1792.5" y1="329" x2="1792.5" y2="354" stroke="#00ff00" stroke-width="1"/><rect x="1787.5" y="330.5" width="10" height="9" fill="#000" stroke="#00ff00" stroke-width="1"/><line x1="1808.5" y1="332" x2="1808.5" y2="354" stroke="#00ff00" stroke-width="1"/><rect x="1803.5" y="332.5" width="10" height="5" fill="#fff" stroke="#00ff00" stroke-width="1"/><line x1="1824.5" y1="331" x2="1824.5" y2="350" stroke="#00ff00" stroke-width="1"/><rect x="1819.5" y="337.5" width="10" height="6" fill="#fff" stroke="#00ff00" stroke-width="1"/><line x1="1840.5" y1="332" x2="1840.5" y2="353" stroke="#00ff00" stroke-width="1"/><rect x="1835.5" y="334.5" width="10" height="9" fill="#000" stroke="#00ff00" stroke-width="1"/><line x1="1856.5" y1="314" x2="1856.5" y2="335" stroke="#00ff00" stroke-width="1"/><rect x="1851.5" y="316.5" width="10" height="18" fill="#000" stroke="#00ff00" stroke-width="1"/><line x1="1872.5" y1="297" x2="1872.5" y2="329" stroke="#00ff00" stroke-width="1"/><rect x="1867.5" y="300.5" width="10" height="16" fill="#000" stroke="#00ff00" stroke-width="1"/><line x1="1888.5" y1="268" x2="1888.5" y2="305" stroke="#00ff00" stroke-width="1"/><rect x="1883.5" y="271.5" width="10" height="30" fill="#000" stroke="#00ff00" stroke-width="1"/><line x1="1904.5" y1="261" x2="1904.5" y2="286" stroke="#00ff00" stroke-width="1"/><rect x="1899.5" y="271.5" width="10" height="9" fill="#fff" stroke="#00ff00" stroke-width="1"/><line x1="1920.5" y1="259" x2="1920.5" y2="285" stroke="#00ff00" stroke-width="1"/><rect x="1915.5" y="275.5" width="10" height="7" fill="#000" stroke="#00ff00" stroke-width="1"/><line x1="1936.5" y1="257" x2="1936.5" y2="281" stroke="#00ff00" stroke-width="1"/><rect x="1931.5" y="261.5" width="10" height="14" fill="#000" stroke="#00ff00" stroke-width="1"/><line x1="1952.5" y1="257" x2="1952.5" y2="285" stroke="#00ff00" stroke-width="1"/><rect x="1947.5" y="262.5" width="10" height="19" fill="#fff" stroke="#00ff00" stroke-width="1"/><line x1="1968.5" y1="278" x2="1968.5" y2="294" stroke="#00ff00" stroke-width="1"/><rect x="1963" y="282" width="11" height="2" fill="#00ff00"/><line x1="1984.5" y1="270" x2="1984.5" y2="288" stroke="#00ff00" stroke-width="1"/><rect x="1979" y="282" width="11" height="2" fill="#00ff00"/><line x1="2000.5" y1="251" x2="2000.5" y2="283" stroke="#00ff00" stroke-width="1"/><rect x="1995.5" y="253.5" width="10" height="29" fill="#000" stroke="#00ff00" stroke-width="1"/><line x1="2016.5" y1="254" x2="2016.5" y2="275" stroke="#00ff00" stroke-width="1"/><rect x="2011.5" y="254.5" width="10" height="16" fill="#fff" stroke="#00ff00" stroke-width="1"/><line x1="2032.5" y1="264" x2="2032.5" y2="297" stroke="#00ff00" stroke-width="1"/><rect x="2027.5" y="270.5" width="10" height="20" fill="#fff" stroke="#00ff00" stroke-width="1"/><line x1="2048.5" y1="285" x2="2048.5" y2="308" stroke="#00ff00" stroke-width="1"/><rect x="2043.5" y="289.5" width="10" height="18" fill="#fff" stroke="#00ff00" stroke-width="1"/><line x1="2064.5" y1="298" x2="2064.5" y2="311" stroke="#00ff00" stroke-width="1"/><rect x="2059.5" y="303.5" width="10" height="4" fill="#000" stroke="#00ff00" stroke-width="1"/><line x1="2080.5" y1="299" x2="2080.5" y2="320" stroke="#00ff00" stroke-width="1"/><rect x="2075.5" y="303.5" width="10" height="7" fill="#fff" stroke="#00ff00" stroke-width="1"/><line x1="2096.5" y1="301" x2="2096.5" y2="313" stroke="#00ff00" stroke-width="1"/><rect x="2091.5" y="305.5" width="10" height="5" fill="#000" stroke="#00ff00" stroke-width="1"/><line x1="2112.5" y1="295" x2="2112.5" y2="312" stroke="#00ff00" stroke-width="1"/><rect x="2107.5" y="298.5" width="10" height="7" fill="#000" stroke="#00ff00" stroke-width="1"/><line x1="2128.5" y1="288" x2="2128.5" y2="307" stroke="#00ff00" stroke-width="1"/><rect x="2123.5" y="294.5" width="10" height="4" fill="#000" stroke="#00ff00" stroke-width="1"/><line x1="2144.5" y1="293" x2="2144.5" y2="309" stroke="#00ff00" stroke-width="1"/><rect x="2139.5" y="294.5" width="10" height="14" fill="#fff" stroke="#00ff00" stroke-width="1"/><line x1="2160.5" y1="301" x2="2160.5" y2="313" stroke="#00ff00" stroke-width="1"/><rect x="2155.5" y="308.5" width="10" height="3" fill="#fff" stroke="#00ff00" stroke-width="1"/><line x1="2176.5" y1="301" x2="2176.5" y2="320" stroke="#00ff00" stroke-width="1"/><rect x="2171.5" y="306.5" width="10" height="5" fill="#000" stroke="#00ff00" stroke-width="1"/><line x1="2192.5" y1="303" x2="2192.5" y2="319" stroke="#00ff00" stroke-width="1"/><rect x="2187.5" y="307.5" width="10" height="11" fill="#fff" stroke="#00ff00" stroke-width="1"/><line x1="2208.5" y1="305" x2="2208.5" y2="325" stroke="#00ff00" stroke-width="1"/><rect x="2203.5" y="311.5" width="10" height="8" fill="#000" stroke="#00ff00" stroke-width="1"/><line x1="2224.5" y1="282" x2="2224.5" y2="315" stroke="#00ff00" stroke-width="1"/><rect x="2219.5" y="282.5" width="10" height="29" fill="#000" stroke="#00ff00" stroke-width="1"/><line x1="2240.5" y1="267" x2="2240.5" y2="287" stroke="#00ff00" stroke-width="1"/><rect x="2235.5" y="270.5" width="10" height="12" fill="#000" stroke="#00ff00" stroke-width="1"/><line x1="2256.5" y1="268" x2="2256.5" y2="281" stroke="#00ff00" stroke-width="1"/><rect x="2251.5" y="271.5" width="10" height="3" fill="#fff" stroke="#00ff00" stroke-width="1"/><line x1="2272.5" y1="273" x2="2272.5" y2="292" stroke="#00ff00" stroke-width="1"/><rect x="2267.5" y="274.5" width="10" height="8" fill="#fff" stroke="#00ff00" stroke-width="1"/><line x1="2288.5" y1="271" x2="2288.5" y2="283" stroke="#00ff00" stroke-width="1"/><rect x="2283.5" y="277.5" width="10" height="5" fill="#000" stroke="#00ff00" stroke-width="1"/><line x1="2304.5" y1="271" x2="2304.5" y2="287" stroke="#00ff00" stroke-width="1"/><rect x="2299.5" y="274.5" width="10" height="4" fill="#000" stroke="#00ff00" stroke-width="1"/><line x1="2320.5" y1="273" x2="2320.5" y2="293" stroke="#00ff00" stroke-width="1"/><rect x="2315.5" y="274.5" width="10" height="16" fill="#fff" stroke="#00ff00" stroke-width="1"/><line x1="2336.5" y1="283" x2="2336.5" y2="297" stroke="#00ff00" stroke-width="1"/><rect x="2331.5" y="290.5" width="10" height="2" fill="#fff" stroke="#00ff00" stroke-width="1"/><line x1="2352.5" y1="288" x2="2352.5" y2="301" stroke="#00ff00" stroke-width="1"/><rect x="2347" y="292" width="11" height="2" fill="#00ff00"/><line x1="2368.5" y1="279" x2="2368.5" y2="298" stroke="#00ff00" stroke-width="1"/><rect x="2363.5" y="286.5" width="10" height="8" fill="#000" stroke="#00ff00" stroke-width="1"/><line x1="2384.5" y1="272" x2="2384.5" y2="287" stroke="#00ff00" stroke-width="1"/><rect x="2379.5" y="277.5" width="10" height="9" fill="#000" stroke="#00ff00" stroke-width="1"/><line x1="2400.5" y1="264" x2="2400.5" y2="280" stroke="#00ff00" stroke-width="1"/><rect x="2395.5" y="269.5" width="10" height="8" fill="#000" stroke="#00ff00" stroke-width="1"/><line x1="2416.5" y1="262" x2="2416.5" y2="275" stroke="#00ff00" stroke-width="1"/><rect x="2411.5" y="269.5" width="10" height="5" fill="#fff" stroke="#00ff00" stroke-width="1"/><line x1="2432.5" y1="274" x2="2432.5" y2="293" stroke="#00ff00" stroke-width="1"/><rect x="2427.5" y="274.5" width="10" height="17" fill="#fff" stroke="#00ff00" stroke-width="1"/><line x1="2448.5" y1="268" x2="2448.5" y2="293" stroke="#00ff00" stroke-width="1"/><rect x="2443.5" y="270.5" width="10" height="22" fill="#000" stroke="#00ff00" stroke-width="1"/><line x1="2464.5" y1="246" x2="2464.5" y2="275" stroke="#00ff00" stroke-width="1"/><rect x="2459.5" y="248.5" width="10" height="22" fill="#000" stroke="#00ff00" stroke-width="1"/><line x1="2480.5" y1="242" x2="2480.5" y2="253" stroke="#00ff00" stroke-width="1"/><rect x="2475" y="247" width="11" height="2" fill="#00ff00"/><line x1="2496.5" y1="238" x2="2496.5" y2="248" stroke="#00ff00" stroke-width="1"/><rect x="2491.5" y="239.5" width="10" height="8" fill="#000" stroke="#00ff00" stroke-width="1"/><line x1="2512.5" y1="239" x2="2512.5" y2="260" stroke="#00ff00" stroke-width="1"/><rect x="2507.5" y="239.5" width="10" height="13" fill="#fff" stroke="#00ff00" stroke-width="1"/><line x1="2528.5" y1="249" x2="2528.5" y2="262" stroke="#00ff00" stroke-width="1"/><rect x="2523.5" y="251.5" width="10" height="7" fill="#fff" stroke="#00ff00" stroke-width="1"/><line x1="2544.5" y1="244" x2="2544.5" y2="261" stroke="#00ff00" stroke-width="1"/><rect x="2539.5" y="255.5" width="10" height="3" fill="#000" stroke="#00ff00" stroke-width="1"/><line x1="2560.5" y1="253" x2="2560.5" y2="261" stroke="#00ff00" stroke-width="1"/><rect x="2555.5" y="255.5" width="10" height="3" fill="#fff" stroke="#00ff00" stroke-width="1"/><line x1="2576.5" y1="242" x2="2576.5" y2="261" stroke="#00ff00" stroke-width="1"/><rect x="2571.5" y="243.5" width="10" height="15" fill="#000" stroke="#00ff00" stroke-width="1"/><line x1="2592.5" y1="236" x2="2592.5" y2="247" stroke="#00ff00" stroke-width="1"/><rect x="2587.5" y="239.5" width="10" height="4" fill="#000" stroke="#00ff00" stroke-width="1"/><line x1="2608.5" y1="230" x2="2608.5" y2="245" stroke="#00ff00" stroke-width="1"/><rect x="2603.5" y="233.5" width="10" height="6" fill="#000" stroke="#00ff00" stroke-width="1"/><line x1="2624.5" y1="215" x2="2624.5" y2="240" stroke="#00ff00" stroke-width="1"/><rect x="2619.5" y="216.5" width="10" height="17" fill="#000" stroke="#00ff00" stroke-width="1"/><line x1="2640.5" y1="200" x2="2640.5" y2="220" stroke="#00ff00" stroke-width="1"/><rect x="2635.5" y="204.5" width="10" height="13" fill="#000" stroke="#00ff00" stroke-width="1"/><line x1="2656.5" y1="190" x2="2656.5" y2="205" stroke="#00ff00" stroke-width="1"/><rect x="2651.5" y="195.5" width="10" height="9" fill="#000" stroke="#00ff00" stroke-width="1"/><line x1="2672.5" y1="185" x2="2672.5" y2="203" stroke="#00ff00" stroke-width="1"/><rect x="2667.5" y="190.5" width="10" height="5" fill="#000" stroke="#00ff00" stroke-width="1"/><line x1="2688.5" y1="177" x2="2688.5" y2="193" stroke="#00ff00" stroke-width="1"/><rect x="2683.5" y="187.5" width="10" height="3" fill="#000" stroke="#00ff00" stroke-width="1"/><line x1="2704.5" y1="186" x2="2704.5" y2="202" stroke="#00ff00" stroke-width="1"/><rect x="2699.5" y="187.5" width="10" height="8" fill="#fff" stroke="#00ff00" stroke-width="1"/><line x1="2720.5" y1="187" x2="2720.5" y2="208" stroke="#00ff00" stroke-width="1"/><rect x="2715.5" y="192.5" width="10" height="2" fill="#000" stroke="#00ff00" stroke-width="1"/><line x1="2736.5" y1="187" x2="2736.5" y2="203" stroke="#00ff00" stroke-width="1"/><rect x="2731" y="192" width="11" height="2" fill="#00ff00"/><line x1="2752.5" y1="177" x2="2752.5" y2="195" stroke="#00ff00" stroke-width="1"/><rect x="2747.5" y="177.5" width="10" height="15" fill="#000" stroke="#00ff00" stroke-width="1"/><line x1="2768.5" y1="140" x2="2768.5" y2="179" stroke="#00ff00" stroke-width="1"/><rect x="2763.5" y="156.5" width="10" height="21" fill="#000" stroke="#00ff00" stroke-width="1"/><line x1="2784.5" y1="150" x2="2784.5" y2="202" stroke="#00ff00" stroke-width="1"/><rect x="2779.5" y="156.5" width="10" height="37" fill="#fff" stroke="#00ff00" stroke-width="1"/><line x1="2800.5" y1="152" x2="2800.5" y2="194" stroke="#00ff00" stroke-width="1"/><rect x="2795.5" y="162.5" width="10" height="31" fill="#000" stroke="#00ff00" stroke-width="1"/><line x1="2816.5" y1="133" x2="2816.5" y2="163" stroke="#00ff00" stroke-width="1"/><rect x="2811.5" y="135.5" width="10" height="27" fill="#000" stroke="#00ff00" stroke-width="1"/><line x1="2832.5" y1="127" x2="2832.5" y2="151" stroke="#00ff00" stroke-width="1"/><rect x="2827.5" y="135.5" width="10" height="11" fill="#fff" stroke="#00ff00" stroke-width="1"/><line x1="2848.5" y1="144" x2="2848.5" y2="164" stroke="#00ff00" stroke-width="1"/><rect x="2843.5" y="145.5" width="10" height="8" fill="#fff" stroke="#00ff00" stroke-width="1"/><line x1="2864.5" y1="149" x2="2864.5" y2="167" stroke="#00ff00" stroke-width="1"/><rect x="2859.5" y="153.5" width="10" height="5" fill="#fff" stroke="#00ff00" stroke-width="1"/><line x1="2880.5" y1="152" x2="2880.5" y2="167" stroke="#00ff00" stroke-width="1"/><rect x="2875.5" y="158.5" width="10" height="6" fill="#fff" stroke="#00ff00" stroke-width="1"/><line x1="2896.5" y1="158" x2="2896.5" y2="169" stroke="#00ff00" stroke-width="1"/><rect x="2891" y="163" width="11" height="2" fill="#00ff00"/><line x1="2912.5" y1="153" x2="2912.5" y2="169" stroke="#00ff00" stroke-width="1"/><rect x="2907.5" y="156.5" width="10" height="6" fill="#000" stroke="#00ff00" stroke-width="1"/><line x1="2928.5" y1="142" x2="2928.5" y2="161" stroke="#00ff00" stroke-width="1"/><rect x="2923.5" y="146.5" width="10" height="11" fill="#000" stroke="#00ff00" stroke-width="1"/><line x1="2944.5" y1="138" x2="2944.5" y2="150" stroke="#00ff00" stroke-width="1"/><rect x="2939.5" y="141.5" width="10" height="5" fill="#000" stroke="#00ff00" stroke-width="1"/><line x1="2960.5" y1="105" x2="2960.5" y2="155" stroke="#00ff00" stroke-width="1"/><rect x="2955.5" y="110.5" width="10" height="31" fill="#000" stroke="#00ff00" stroke-width="1"/><line x1="2976.5" y1="102" x2="2976.5" y2="115" stroke="#00ff00" stroke-width="1"/><rect x="2971" y="110" width="11" height="2" fill="#00ff00"/><line x1="2992.5" y1="104" x2="2992.5" y2="132" stroke="#00ff00" stroke-width="1"/><rect x="2987.5" y="112.5" width="10" height="12" fill="#fff" stroke="#00ff00" stroke-width="1"/><line x1="3008.5" y1="112" x2="3008.5" y2="137" stroke="#00ff00" stroke-width="1"/><rect x="3003.5" y="123.5" width="10" height="6" fill="#fff" stroke="#00ff00" stroke-width="1"/><line x1="3024.5" y1="128" x2="3024.5" y2="155" stroke="#00ff00" stroke-width="1"/><rect x="3019.5" y="129.5" width="10" height="25" fill="#fff" stroke="#00ff00" stroke-width="1"/><line x1="3040.5" y1="144" x2="3040.5" y2="162" stroke="#00ff00" stroke-width="1"/><rect x="3035.5" y="148.5" width="10" height="6" fill="#000" stroke="#00ff00" stroke-width="1"/><line x1="3056.5" y1="113" x2="3056.5" y2="149" stroke="#00ff00" stroke-width="1"/><rect x="3051.5" y="116.5" width="10" height="32" fill="#000" stroke="#00ff00" stroke-width="1"/><line x1="3072.5" y1="91" x2="3072.5" y2="116" stroke="#00ff00" stroke-width="1"/><rect x="3067.5" y="110.5" width="10" height="5" fill="#000" stroke="#00ff00" stroke-width="1"/><line x1="3088.5" y1="94" x2="3088.5" y2="120" stroke="#00ff00" stroke-width="1"/><rect x="3083.5" y="100.5" width="10" height="10" fill="#000" stroke="#00ff00" stroke-width="1"/><line x1="3104.5" y1="79" x2="3104.5" y2="103" stroke="#00ff00" stroke-width="1"/><rect x="3099.5" y="81.5" width="10" height="19" fill="#000" stroke="#00ff00" stroke-width="1"/></g><path d="M2686.5 187.5 h4 v3 h2.5 l-4.5 4.5 l-4.5 -4.5 h2.5 z" fill="#e8401c" stroke="#fff" stroke-width="0.9"/><path d="M2688.5 196 l4.5 4.5 h-2.5 v3 h-4 v-3 h-2.5 z" fill="#1060c0" stroke="#fff" stroke-width="0.9"/><rect x="1717.5" y="68.5" width="14" height="10" fill="#fff" stroke="#e03020"/><path d="M1719 71.5 h5 M1719 73.5 h5 M1719 75.5 h5" stroke="#e03020"/><path d="M1725 71.5 h5 M1725 73.5 h5 M1725 75.5 h5" stroke="#1f6fb8"/><rect x="1724.5" y="68.5" width="7" height="10" fill="none" stroke="#1f6fb8"/><rect x="1738.5" y="69.5" width="6" height="9" fill="#ffd0c8" stroke="#e03020"/><rect x="1747.5" y="69.5" width="6" height="9" fill="#bfe0ff" stroke="#1f6fb8"/><rect x="1742" y="68" width="6" height="3" fill="#fff"/></svg>
<div class="t" style="font-size:11px;line-height:16px;top:65.0px;color:#fff;left:1758.5px;transform:scaleX(0.8659);transform-origin:0 50%;">AUDUSD, M5:  Australian Dollar vs US Dollar  0.67114 0.67114 0.67114 0.67114</div>
<div class="r" style="left:1713px;top:80px;width:1400px;height:18px;overflow:hidden;">
<div class="t" style="left:3.5px;top:2px;font-size:11px;line-height:14px;color:#fff;transform:scaleX(0.8505);transform-origin:0 50%;">EA торговля спредами - отбой на мартине с ассистентом в две [объемы= Объемы, символы, режимы ; Assistant_mode=-1; buy=true;</div>
<div class="t" style="left:586.0px;top:2px;font-size:11px;line-height:14px;color:#fff;transform:scaleX(0.8794);transform-origin:0 50%;">sell=false; Symbol_One= ; Lots_Symbol_One=0.1; Stop_Loss=0; Take_Profit=0; Symbol1=AUDUSD; Symbol2=USDCAD;</div>
<div class="t" style="left:1113.0px;top:2px;font-size:11px;line-height:14px;color:#fff;transform:scaleX(0.8582);transform-origin:0 50%;">Reverse=false; мартин_и_тралы= параметры мартина ; Lots_Sym</div>
</div>
<div class="t" style="font-size:11px;line-height:16px;top:82.5px;color:#fff;left:3117.0px;transform:scaleX(0.9042);transform-origin:0 50%;">0.66915</div>
<div class="t" style="font-size:11px;line-height:16px;top:116.5px;color:#fff;left:3117.0px;transform:scaleX(0.9042);transform-origin:0 50%;">0.66860</div>
<div class="t" style="font-size:11px;line-height:16px;top:150.5px;color:#fff;left:3117.0px;transform:scaleX(0.9042);transform-origin:0 50%;">0.66805</div>
<div class="t" style="font-size:11px;line-height:16px;top:184.5px;color:#fff;left:3117.0px;transform:scaleX(0.9042);transform-origin:0 50%;">0.66750</div>
<div class="t" style="font-size:11px;line-height:16px;top:218.5px;color:#fff;left:3117.0px;transform:scaleX(0.9042);transform-origin:0 50%;">0.66695</div>
<div class="t" style="font-size:11px;line-height:16px;top:253.5px;color:#fff;left:3117.0px;transform:scaleX(0.9042);transform-origin:0 50%;">0.66640</div>
<div class="t" style="font-size:11px;line-height:16px;top:287.5px;color:#fff;left:3117.0px;transform:scaleX(0.9042);transform-origin:0 50%;">0.66585</div>
<div class="t" style="font-size:11px;line-height:16px;top:321.5px;color:#fff;left:3117.0px;transform:scaleX(0.9042);transform-origin:0 50%;">0.66530</div>
<div class="t" style="font-size:11px;line-height:16px;top:355.5px;color:#fff;left:3117.0px;transform:scaleX(0.9042);transform-origin:0 50%;">0.66475</div>
<div class="t" style="font-size:11px;line-height:16px;top:398.5px;color:#fff;left:1713.5px;transform:scaleX(0.8483);transform-origin:0 50%;">15 May 2023</div>
<div class="t" style="font-size:11px;line-height:16px;top:398.5px;color:#fff;left:1777.5px;transform:scaleX(0.8543);transform-origin:0 50%;">15 May 03:45</div>
<div class="t" style="font-size:11px;line-height:16px;top:398.5px;color:#fff;left:1841.5px;transform:scaleX(0.8543);transform-origin:0 50%;">15 May 04:05</div>
<div class="t" style="font-size:11px;line-height:16px;top:398.5px;color:#fff;left:1905.5px;transform:scaleX(0.8543);transform-origin:0 50%;">15 May 04:25</div>
<div class="t" style="font-size:11px;line-height:16px;top:398.5px;color:#fff;left:1969.5px;transform:scaleX(0.8543);transform-origin:0 50%;">15 May 04:45</div>
<div class="t" style="font-size:11px;line-height:16px;top:398.5px;color:#fff;left:2033.5px;transform:scaleX(0.8543);transform-origin:0 50%;">15 May 05:05</div>
<div class="t" style="font-size:11px;line-height:16px;top:398.5px;color:#fff;left:2097.5px;transform:scaleX(0.8543);transform-origin:0 50%;">15 May 05:25</div>
<div class="t" style="font-size:11px;line-height:16px;top:398.5px;color:#fff;left:2161.5px;transform:scaleX(0.8543);transform-origin:0 50%;">15 May 05:45</div>
<div class="t" style="font-size:11px;line-height:16px;top:398.5px;color:#fff;left:2225.5px;transform:scaleX(0.8543);transform-origin:0 50%;">15 May 06:05</div>
<div class="t" style="font-size:11px;line-height:16px;top:398.5px;color:#fff;left:2289.5px;transform:scaleX(0.8543);transform-origin:0 50%;">15 May 06:25</div>
<div class="t" style="font-size:11px;line-height:16px;top:398.5px;color:#fff;left:2353.5px;transform:scaleX(0.8543);transform-origin:0 50%;">15 May 06:45</div>
<div class="t" style="font-size:11px;line-height:16px;top:398.5px;color:#fff;left:2417.5px;transform:scaleX(0.8543);transform-origin:0 50%;">15 May 07:05</div>
<div class="t" style="font-size:11px;line-height:16px;top:398.5px;color:#fff;left:2481.5px;transform:scaleX(0.8543);transform-origin:0 50%;">15 May 07:25</div>
<div class="t" style="font-size:11px;line-height:16px;top:398.5px;color:#fff;left:2545.5px;transform:scaleX(0.8543);transform-origin:0 50%;">15 May 07:45</div>
<div class="t" style="font-size:11px;line-height:16px;top:398.5px;color:#fff;left:2609.5px;transform:scaleX(0.8543);transform-origin:0 50%;">15 May 08:05</div>
<div class="t" style="font-size:11px;line-height:16px;top:398.5px;color:#fff;left:2673.5px;transform:scaleX(0.8543);transform-origin:0 50%;">15 May 08:25</div>
<div class="t" style="font-size:11px;line-height:16px;top:398.5px;color:#fff;left:2737.5px;transform:scaleX(0.8543);transform-origin:0 50%;">15 May 08:45</div>
<div class="t" style="font-size:11px;line-height:16px;top:398.5px;color:#fff;left:2801.5px;transform:scaleX(0.8543);transform-origin:0 50%;">15 May 09:05</div>
<div class="t" style="font-size:11px;line-height:16px;top:398.5px;color:#fff;left:2865.5px;transform:scaleX(0.8543);transform-origin:0 50%;">15 May 09:25</div>
<div class="t" style="font-size:11px;line-height:16px;top:398.5px;color:#fff;left:2929.5px;transform:scaleX(0.8543);transform-origin:0 50%;">15 May 09:45</div>
<div class="t" style="font-size:11px;line-height:16px;top:398.5px;color:#fff;left:2993.5px;transform:scaleX(0.8543);transform-origin:0 50%;">15 May 10:05</div>
<div class="t" style="font-size:11px;line-height:16px;top:398.5px;color:#fff;left:3057.5px;transform:scaleX(0.8543);transform-origin:0 50%;">15 May 10:25</div>
<div class="r" style="left:1709px;top:418px;width:1451px;height:26px;background:#f0f0f0;"></div>
<div class="r" style="left:1709px;top:418px;width:1451px;height:2px;background:#ffffff;"></div>
<div class="r" style="left:1709px;top:420px;width:1451px;height:1px;background:#2a2a2a;"></div>
<div class="r" style="left:1709px;top:420px;width:1px;height:19px;background:#2a2a2a;"></div>
<div class="r" style="left:1709px;top:439px;width:1451px;height:1px;background:#fafafa;"></div>
<div class="t" style="font-size:12px;line-height:17px;top:422.5px;color:#6d6d6d;left:1724.0px;transform:scaleX(0.9657);transform-origin:0 50%;">AUDCHF,Daily</div>
<div class="t" style="font-size:12px;line-height:17px;top:422.5px;color:#6d6d6d;left:1825.0px;transform:scaleX(0.8839);transform-origin:0 50%;">GBPJPY,Daily</div>
<div class="t" style="font-size:12px;line-height:17px;top:422.5px;color:#6d6d6d;left:1917.0px;transform:scaleX(0.8651);transform-origin:0 50%;">EURUSD,H1</div>
<div class="t" style="font-size:12px;line-height:17px;top:422.5px;color:#6d6d6d;left:2002.5px;transform:scaleX(0.8922);transform-origin:0 50%;">EURUSD,Daily</div>
<div class="t" style="font-size:12px;line-height:17px;top:422.5px;color:#6d6d6d;left:2099.0px;transform:scaleX(0.8855);transform-origin:0 50%;">EURUSD,M30</div>
<div class="t" style="font-size:12px;line-height:17px;top:422.5px;color:#6d6d6d;left:2191.0px;transform:scaleX(0.9408);transform-origin:0 50%;">AUDUSD,M5</div>
<div class="t" style="font-size:12px;line-height:17px;top:422.5px;color:#6d6d6d;left:2281.0px;transform:scaleX(0.9337);transform-origin:0 50%;">USDCAD,M5</div>
<div class="t" style="font-size:12px;line-height:17px;top:422.5px;color:#6d6d6d;left:2370.0px;transform:scaleX(0.9266);transform-origin:0 50%;">AUDUSD,M5</div>
<div class="t" style="font-size:12px;line-height:17px;top:422.5px;color:#6d6d6d;left:2457.5px;transform:scaleX(0.9099);transform-origin:0 50%;">XAUUSD,H1</div>
<div class="t" style="font-size:12px;line-height:17px;top:422.5px;color:#6d6d6d;left:2544.0px;transform:scaleX(0.9109);transform-origin:0 50%;">XAGUSD,Daily</div>
<div class="t" style="font-size:12px;line-height:17px;top:422.5px;color:#6d6d6d;left:2639.5px;transform:scaleX(0.9620);transform-origin:0 50%;">XAGXAU.synthetic,M15</div>
<div class="t" style="font-size:12px;line-height:17px;top:422.5px;color:#6d6d6d;left:2784.5px;transform:scaleX(0.9115);transform-origin:0 50%;">XAGUSD,M15</div>
<div class="t" style="font-size:12px;line-height:17px;top:422.5px;color:#6d6d6d;left:2878.0px;transform:scaleX(0.9296);transform-origin:0 50%;">XAGUSD,M5</div>
<svg style="left:0;top:0" width="3160" height="450"><line x1="1812.5" y1="424" x2="1812.5" y2="437" stroke="#6d6d6d" stroke-width="1.2"/><line x1="1905" y1="424" x2="1905" y2="437" stroke="#6d6d6d" stroke-width="1.2"/><line x1="1990" y1="424" x2="1990" y2="437" stroke="#6d6d6d" stroke-width="1.2"/><line x1="2087" y1="424" x2="2087" y2="437" stroke="#6d6d6d" stroke-width="1.2"/><line x1="2180" y1="424" x2="2180" y2="437" stroke="#6d6d6d" stroke-width="1.2"/><line x1="2269" y1="424" x2="2269" y2="437" stroke="#6d6d6d" stroke-width="1.2"/><line x1="2359" y1="424" x2="2359" y2="437" stroke="#6d6d6d" stroke-width="1.2"/><line x1="2447" y1="424" x2="2447" y2="437" stroke="#6d6d6d" stroke-width="1.2"/><line x1="2532" y1="424" x2="2532" y2="437" stroke="#6d6d6d" stroke-width="1.2"/><line x1="2629" y1="424" x2="2629" y2="437" stroke="#6d6d6d" stroke-width="1.2"/><line x1="2774" y1="424" x2="2774" y2="437" stroke="#6d6d6d" stroke-width="1.2"/><line x1="2866" y1="424" x2="2866" y2="437" stroke="#6d6d6d" stroke-width="1.2"/><path d="M2957.5 420 V438.5 H3045.5 V420" fill="#fff" stroke="#222" stroke-width="1"/><path d="M3135 426 v8 l-4 -4 z" fill="#333"/><path d="M3151 426 v8 l4 -4 z" fill="#b0b0b0"/></svg>
<div class="t" style="font-size:12px;line-height:17px;top:422.0px;color:#000;left:2968.0px;transform:scaleX(0.9337);transform-origin:0 50%;">AUDUSD,M5</div>
<div class="r" style="left:1248px;top:444px;width:1912px;height:536px;background:#f0f0f0;"></div>
<div class="r" style="left:1249px;top:458px;width:13px;height:522px;background:#cddcec;"></div>
<div class="r" style="left:1248px;top:439px;width:461px;height:1px;background:#a8a8a8;"></div>
<svg style="left:0;top:0" width="1270" height="980"><path d="M1252 447 l5.5 5 M1257.5 447 l-5.5 5" stroke="#000" stroke-width="1.7"/></svg>
<div class="t" style="left:1250px;top:1000px;font-size:11.5px;line-height:11px;color:#000;transform:rotate(-90deg);transform-origin:0 0;">Тестер стратегий</div>
<div class="r" style="left:1263px;top:444px;width:1885px;height:536px;background:#ffffff;"></div>
<div class="r" style="left:1263px;top:444px;width:1px;height:531px;background:#a0a0a0;"></div>
<div class="r" style="left:1263px;top:444px;width:1885px;height:1px;background:#a0a0a0;"></div>
<div class="r" style="left:1264px;top:463.7px;width:1883px;height:19px;background:#ebebeb;"></div>
<div class="r" style="left:1264px;top:501.7px;width:1883px;height:19px;background:#ebebeb;"></div>
<div class="r" style="left:1264px;top:539.7px;width:1883px;height:19px;background:#ebebeb;"></div>
<div class="r" style="left:1264px;top:577.7px;width:1883px;height:19px;background:#ebebeb;"></div>
<div class="r" style="left:1264px;top:615.7px;width:1883px;height:19px;background:#ebebeb;"></div>
<div class="r" style="left:1264px;top:653.7px;width:1883px;height:19px;background:#ebebeb;"></div>
<div class="r" style="left:1264px;top:691.7px;width:1883px;height:19px;background:#ebebeb;"></div>
<div class="r" style="left:1264px;top:729.7px;width:1883px;height:19px;background:#ebebeb;"></div>
<div class="r" style="left:1264px;top:767.7px;width:1883px;height:19px;background:#ebebeb;"></div>
<div class="r" style="left:1264px;top:805.7px;width:1883px;height:19px;background:#ebebeb;"></div>
<div class="t" style="font-size:12px;line-height:17px;top:446.8px;color:#000;left:1267.4px;">Качество истории</div>
<div class="t" style="font-size:12px;line-height:17px;top:446.8px;color:#000;right:1293.4px;transform:scaleX(0.9300);transform-origin:100% 50%;">99%</div>
<div class="t" style="font-size:12px;line-height:17px;top:465.8px;color:#000;left:1267.4px;">Бары</div>
<div class="t" style="font-size:12px;line-height:17px;top:465.8px;color:#000;right:1293.4px;transform:scaleX(0.9300);transform-origin:100% 50%;">350266</div>
<div class="t" style="font-size:12px;line-height:17px;top:465.8px;color:#000;left:1903.0px;">Тики</div>
<div class="t" style="font-size:12px;line-height:17px;top:465.8px;color:#000;right:658.0px;transform:scaleX(0.9300);transform-origin:100% 50%;">1315028</div>
<div class="t" style="font-size:12px;line-height:17px;top:465.8px;color:#000;left:2539.5px;">Символы</div>
<div class="t" style="font-size:12px;line-height:17px;top:465.8px;color:#000;right:16.6px;transform:scaleX(0.9300);transform-origin:100% 50%;">2</div>
<div class="t" style="font-size:12px;line-height:17px;top:484.8px;color:#000;left:1267.4px;">Начальный депозит</div>
<div class="t" style="font-size:12px;line-height:17px;top:484.8px;color:#000;right:1293.4px;transform:scaleX(0.9300);transform-origin:100% 50%;">25 000.00</div>
<div class="t" style="font-size:12px;line-height:17px;top:503.8px;color:#000;left:1267.4px;">Чистая прибыль</div>
<div class="t" style="font-size:12px;line-height:17px;top:503.8px;color:#000;right:1293.4px;transform:scaleX(0.9300);transform-origin:100% 50%;">69 216.88</div>
<div class="t" style="font-size:12px;line-height:17px;top:503.8px;color:#000;left:1903.0px;">Абсолютная просадка по балансу</div>
<div class="t" style="font-size:12px;line-height:17px;top:503.8px;color:#000;right:658.0px;transform:scaleX(0.9300);transform-origin:100% 50%;">0.00</div>
<div class="t" style="font-size:12px;line-height:17px;top:503.8px;color:#000;left:2539.5px;">Абсолютная просадка по средствам</div>
<div class="t" style="font-size:12px;line-height:17px;top:503.8px;color:#000;right:16.6px;transform:scaleX(0.9300);transform-origin:100% 50%;">6 076.17</div>
<div class="t" style="font-size:12px;line-height:17px;top:522.8px;color:#000;left:1267.4px;">Общая прибыль</div>
<div class="t" style="font-size:12px;line-height:17px;top:522.8px;color:#000;right:1293.4px;transform:scaleX(0.9300);transform-origin:100% 50%;">130 372.98</div>
<div class="t" style="font-size:12px;line-height:17px;top:522.8px;color:#000;left:1903.0px;">Максимальная просадка по балансу</div>
<div class="t" style="font-size:12px;line-height:17px;top:522.8px;color:#000;right:658.0px;transform:scaleX(0.9300);transform-origin:100% 50%;">3 846.79 (6.77%)</div>
<div class="t" style="font-size:12px;line-height:17px;top:522.8px;color:#000;left:2539.5px;">Максимальная просадка по средствам</div>
<div class="t" style="font-size:12px;line-height:17px;top:522.8px;color:#000;right:16.6px;transform:scaleX(0.9300);transform-origin:100% 50%;">31 552.60 (59.43%)</div>
<div class="t" style="font-size:12px;line-height:17px;top:541.8px;color:#000;left:1267.4px;">Общий убыток</div>
<div class="t" style="font-size:12px;line-height:17px;top:541.8px;color:#000;right:1293.4px;transform:scaleX(0.9300);transform-origin:100% 50%;">-61 156.10</div>
<div class="t" style="font-size:12px;line-height:17px;top:541.8px;color:#000;left:1903.0px;">Относительная просадка по балансу</div>
<div class="t" style="font-size:12px;line-height:17px;top:541.8px;color:#000;right:658.0px;transform:scaleX(0.9300);transform-origin:100% 50%;">7.61% (2 667.45)</div>
<div class="t" style="font-size:12px;line-height:17px;top:541.8px;color:#000;left:2539.5px;">Относительная просадка по средствам</div>
<div class="t" style="font-size:12px;line-height:17px;top:541.8px;color:#000;right:16.6px;transform:scaleX(0.9300);transform-origin:100% 50%;">59.43% (31 552.60)</div>
<div class="t" style="font-size:12px;line-height:17px;top:579.8px;color:#000;left:1267.4px;">Прибыльность</div>
<div class="t" style="font-size:12px;line-height:17px;top:579.8px;color:#000;right:1293.4px;transform:scaleX(0.9300);transform-origin:100% 50%;">2.13</div>
<div class="t" style="font-size:12px;line-height:17px;top:579.8px;color:#000;left:1903.0px;">Матожидание выигрыша</div>
<div class="t" style="font-size:12px;line-height:17px;top:579.8px;color:#000;right:658.0px;transform:scaleX(0.9300);transform-origin:100% 50%;">17.24</div>
<div class="t" style="font-size:12px;line-height:17px;top:579.8px;color:#000;left:2539.5px;">Уровень маржи</div>
<div class="t" style="font-size:12px;line-height:17px;top:579.8px;color:#000;right:16.6px;transform:scaleX(0.9300);transform-origin:100% 50%;">53.04%</div>
<div class="t" style="font-size:12px;line-height:17px;top:598.8px;color:#000;left:1267.4px;">Фактор восстановления</div>
<div class="t" style="font-size:12px;line-height:17px;top:598.8px;color:#000;right:1293.4px;transform:scaleX(0.9300);transform-origin:100% 50%;">2.19</div>
<div class="t" style="font-size:12px;line-height:17px;top:598.8px;color:#000;left:1903.0px;">Коэффициент Шарпа</div>
<div class="t" style="font-size:12px;line-height:17px;top:598.8px;color:#000;right:658.0px;transform:scaleX(0.9300);transform-origin:100% 50%;">0.42</div>
<div class="t" style="font-size:12px;line-height:17px;top:598.8px;color:#000;left:2539.5px;">Z-Счет</div>
<div class="t" style="font-size:12px;line-height:17px;top:598.8px;color:#000;right:16.6px;transform:scaleX(0.9300);transform-origin:100% 50%;">-31.93 (99.74%)</div>
<div class="t" style="font-size:12px;line-height:17px;top:617.8px;color:#000;left:1267.4px;">AHPR</div>
<div class="t" style="font-size:12px;line-height:17px;top:617.8px;color:#000;right:1293.4px;transform:scaleX(0.9300);transform-origin:100% 50%;">1.0003 (0.03%)</div>
<div class="t" style="font-size:12px;line-height:17px;top:617.8px;color:#000;left:1903.0px;">LR Correlation</div>
<div class="t" style="font-size:12px;line-height:17px;top:617.8px;color:#000;right:658.0px;transform:scaleX(0.9300);transform-origin:100% 50%;">1.00</div>
<div class="t" style="font-size:12px;line-height:17px;top:617.8px;color:#000;left:2539.5px;">Результат OnTester</div>
<div class="t" style="font-size:12px;line-height:17px;top:617.8px;color:#000;right:16.6px;transform:scaleX(0.9300);transform-origin:100% 50%;">0</div>
<div class="t" style="font-size:12px;line-height:17px;top:636.8px;color:#000;left:1267.4px;">GHPR</div>
<div class="t" style="font-size:12px;line-height:17px;top:636.8px;color:#000;right:1293.4px;transform:scaleX(0.9300);transform-origin:100% 50%;">1.0003 (0.03%)</div>
<div class="t" style="font-size:12px;line-height:17px;top:636.8px;color:#000;left:1903.0px;">LR Standard Error</div>
<div class="t" style="font-size:12px;line-height:17px;top:636.8px;color:#000;right:658.0px;transform:scaleX(0.9300);transform-origin:100% 50%;">961.02</div>
<div class="t" style="font-size:12px;line-height:17px;top:674.8px;color:#000;left:1267.4px;">Всего трейдов</div>
<div class="t" style="font-size:12px;line-height:17px;top:674.8px;color:#000;right:1293.4px;transform:scaleX(0.9300);transform-origin:100% 50%;">4014</div>
<div class="t" style="font-size:12px;line-height:17px;top:674.8px;color:#000;left:1903.0px;">Короткие трейды (% выигравших)</div>
<div class="t" style="font-size:12px;line-height:17px;top:674.8px;color:#000;right:658.0px;transform:scaleX(0.9300);transform-origin:100% 50%;">2003 (48.98%)</div>
<div class="t" style="font-size:12px;line-height:17px;top:674.8px;color:#000;left:2539.5px;">Длинные трейды (% выигравших)</div>
<div class="t" style="font-size:12px;line-height:17px;top:674.8px;color:#000;right:16.6px;transform:scaleX(0.9300);transform-origin:100% 50%;">2011 (50.12%)</div>
<div class="t" style="font-size:12px;line-height:17px;top:693.8px;color:#000;left:1267.4px;">Всего сделок</div>
<div class="t" style="font-size:12px;line-height:17px;top:693.8px;color:#000;right:1293.4px;transform:scaleX(0.9300);transform-origin:100% 50%;">8028</div>
<div class="t" style="font-size:12px;line-height:17px;top:693.8px;color:#000;left:1903.0px;">Прибыльные трейды (% от всех)</div>
<div class="t" style="font-size:12px;line-height:17px;top:693.8px;color:#000;right:658.0px;transform:scaleX(0.9300);transform-origin:100% 50%;">1989 (49.55%)</div>
<div class="t" style="font-size:12px;line-height:17px;top:693.8px;color:#000;left:2539.5px;">Убыточные трейды (% от всех)</div>
<div class="t" style="font-size:12px;line-height:17px;top:693.8px;color:#000;right:16.6px;transform:scaleX(0.9300);transform-origin:100% 50%;">2025 (50.45%)</div>
<div class="t" style="font-size:12px;line-height:17px;top:712.8px;color:#000;right:1293.4px;transform:scaleX(0.9300);transform-origin:100% 50%;">Самый большой</div>
<div class="t" style="font-size:12px;line-height:17px;top:712.8px;color:#000;left:1903.0px;">прибыльный трейд</div>
<div class="t" style="font-size:12px;line-height:17px;top:712.8px;color:#000;right:658.0px;transform:scaleX(0.9300);transform-origin:100% 50%;">4 274.35</div>
<div class="t" style="font-size:12px;line-height:17px;top:712.8px;color:#000;left:2539.5px;">убыточный трейд</div>
<div class="t" style="font-size:12px;line-height:17px;top:712.8px;color:#000;right:16.6px;transform:scaleX(0.9300);transform-origin:100% 50%;">-2 882.46</div>
<div class="t" style="font-size:12px;line-height:17px;top:731.8px;color:#000;right:1293.4px;transform:scaleX(0.9300);transform-origin:100% 50%;">Средний</div>
<div class="t" style="font-size:12px;line-height:17px;top:731.8px;color:#000;left:1903.0px;">прибыльный трейд</div>
<div class="t" style="font-size:12px;line-height:17px;top:731.8px;color:#000;right:658.0px;transform:scaleX(0.9300);transform-origin:100% 50%;">65.55</div>
<div class="t" style="font-size:12px;line-height:17px;top:731.8px;color:#000;left:2539.5px;">убыточный трейд</div>
<div class="t" style="font-size:12px;line-height:17px;top:731.8px;color:#000;right:16.6px;transform:scaleX(0.9300);transform-origin:100% 50%;">-30.20</div>
<div class="t" style="font-size:12px;line-height:17px;top:750.8px;color:#000;right:1293.4px;transform:scaleX(0.9300);transform-origin:100% 50%;">Максимальное количество</div>
<div class="t" style="font-size:12px;line-height:17px;top:750.8px;color:#000;left:1903.0px;">непрерывных выигрышей (прибыль)</div>
<div class="t" style="font-size:12px;line-height:17px;top:750.8px;color:#000;right:658.0px;transform:scaleX(0.9300);transform-origin:100% 50%;">27 (550.05)</div>
<div class="t" style="font-size:12px;line-height:17px;top:750.8px;color:#000;left:2539.5px;">непрерывных проигрышей (убыток)</div>
<div class="t" style="font-size:12px;line-height:17px;top:750.8px;color:#000;right:16.6px;transform:scaleX(0.9300);transform-origin:100% 50%;">20 (-839.31)</div>
<div class="t" style="font-size:12px;line-height:17px;top:769.8px;color:#000;right:1293.4px;transform:scaleX(0.9300);transform-origin:100% 50%;">Макс.</div>
<div class="t" style="font-size:12px;line-height:17px;top:769.8px;color:#000;left:1903.0px;">непрерывная прибыль (число выигрышей)</div>
<div class="t" style="font-size:12px;line-height:17px;top:769.8px;color:#000;right:658.0px;transform:scaleX(0.9300);transform-origin:100% 50%;">4 274.35 (1)</div>
<div class="t" style="font-size:12px;line-height:17px;top:769.8px;color:#000;left:2539.5px;">непрерывный убыток (число проигрышей)</div>
<div class="t" style="font-size:12px;line-height:17px;top:769.8px;color:#000;right:16.6px;transform:scaleX(0.9300);transform-origin:100% 50%;">-2 882.46 (1)</div>
<div class="t" style="font-size:12px;line-height:17px;top:788.8px;color:#000;right:1293.4px;transform:scaleX(0.9300);transform-origin:100% 50%;">Средний</div>
<div class="t" style="font-size:12px;line-height:17px;top:788.8px;color:#000;left:1903.0px;">непрерывный выигрыш</div>
<div class="t" style="font-size:12px;line-height:17px;top:788.8px;color:#000;right:658.0px;transform:scaleX(0.9300);transform-origin:100% 50%;">4</div>
<div class="t" style="font-size:12px;line-height:17px;top:788.8px;color:#000;left:2539.5px;">непрерывный проигрыш</div>
<div class="t" style="font-size:12px;line-height:17px;top:788.8px;color:#000;right:16.6px;transform:scaleX(0.9300);transform-origin:100% 50%;">4</div>
<div class="r" style="left:1902px;top:447px;width:1243px;height:15px;background:#98fb80;box-shadow:inset 0 0 0 1px #615a62;"></div>
<div class="r" style="left:2935px;top:448px;width:12px;height:13px;background:#8ee07a;"></div>
<div class="r" style="left:3148px;top:444px;width:12px;height:536px;background:#f0f0f0;"></div>
<div class="r" style="left:3149px;top:462px;width:10px;height:175px;background:#cdcdcd;"></div>
<svg style="left:0;top:0" width="3160" height="980"><path d="M3150.5 456 l3.5 -3.5 l3.5 3.5" fill="none" stroke="#606060" stroke-width="1.3"/><path d="M3150.5 965 l3.5 3.5 l3.5 -3.5" fill="none" stroke="#606060" stroke-width="1.3"/></svg>
<svg style="left:0;top:0" width="3160" height="980"><defs><linearGradient id="to" gradientUnits="userSpaceOnUse" x1="0" y1="847.4" x2="0" y2="974.4"><stop offset="0" stop-color="#e5a64a"/><stop offset="1" stop-color="#b36800"/></linearGradient><linearGradient id="tg" gradientUnits="userSpaceOnUse" x1="0" y1="847.4" x2="0" y2="974.4"><stop offset="0" stop-color="#5cae6a"/><stop offset="1" stop-color="#0b6b1c"/></linearGradient><linearGradient id="tr" gradientUnits="userSpaceOnUse" x1="0" y1="847.4" x2="0" y2="974.4"><stop offset="0" stop-color="#f0b2a4"/><stop offset="1" stop-color="#982810"/></linearGradient><linearGradient id="tg2" gradientUnits="userSpaceOnUse" x1="0" y1="847.4" x2="0" y2="974.4"><stop offset="0" stop-color="#abddc2"/><stop offset="1" stop-color="#2d8858"/></linearGradient><linearGradient id="tb" gradientUnits="userSpaceOnUse" x1="0" y1="847.4" x2="0" y2="974.4"><stop offset="0" stop-color="#95d3e7"/><stop offset="1" stop-color="#066889"/></linearGradient></defs><line x1="1301" y1="847.4" x2="1859" y2="847.4" stroke="#b4b4b4" stroke-width="1.3"/><line x1="1301" y1="863.3" x2="1859" y2="863.3" stroke="#b4b4b4" stroke-width="1.3"/><line x1="1301" y1="879.1" x2="1859" y2="879.1" stroke="#b4b4b4" stroke-width="1.3"/><line x1="1301" y1="895.0" x2="1859" y2="895.0" stroke="#b4b4b4" stroke-width="1.3"/><line x1="1301" y1="910.9" x2="1859" y2="910.9" stroke="#b4b4b4" stroke-width="1.3"/><line x1="1301" y1="926.8" x2="1859" y2="926.8" stroke="#b4b4b4" stroke-width="1.3"/><line x1="1301" y1="942.6" x2="1859" y2="942.6" stroke="#b4b4b4" stroke-width="1.3"/><line x1="1301" y1="958.5" x2="1859" y2="958.5" stroke="#b4b4b4" stroke-width="1.3"/><line x1="1301" y1="974.4" x2="1859" y2="974.4" stroke="#b4b4b4" stroke-width="1.3"/><rect x="1306" y="847.4" width="1.3" height="127.0" fill="#a0a0a0"/><rect x="1311.7" y="963.2" width="11.5" height="11.2" fill="url(#to)" stroke="#f2a83a" stroke-width="1"/><rect x="1334.7" y="960.2" width="11.5" height="14.2" fill="url(#to)" stroke="#f2a83a" stroke-width="1"/><rect x="1357.7" y="955.1" width="11.5" height="19.3" fill="url(#to)" stroke="#f2a83a" stroke-width="1"/><rect x="1380.7" y="927.9" width="11.5" height="46.5" fill="url(#to)" stroke="#f2a83a" stroke-width="1"/><rect x="1403.7" y="937.3" width="11.5" height="37.1" fill="url(#to)" stroke="#f2a83a" stroke-width="1"/><rect x="1426.7" y="951.3" width="11.5" height="23.1" fill="url(#to)" stroke="#f2a83a" stroke-width="1"/><rect x="1449.7" y="956.9" width="11.5" height="17.5" fill="url(#to)" stroke="#f2a83a" stroke-width="1"/><rect x="1472.7" y="953.8" width="11.5" height="20.6" fill="url(#to)" stroke="#f2a83a" stroke-width="1"/><rect x="1495.7" y="941.6" width="11.5" height="32.8" fill="url(#tg)" stroke="#3aa84a" stroke-width="1"/><rect x="1518.7" y="934.8" width="11.5" height="39.6" fill="url(#tg)" stroke="#3aa84a" stroke-width="1"/><rect x="1541.7" y="915.0" width="11.5" height="59.4" fill="url(#tg)" stroke="#3aa84a" stroke-width="1"/><rect x="1564.7" y="924.6" width="11.5" height="49.8" fill="url(#tg)" stroke="#3aa84a" stroke-width="1"/><rect x="1587.7" y="943.9" width="11.5" height="30.5" fill="url(#tg)" stroke="#3aa84a" stroke-width="1"/><rect x="1610.7" y="933.0" width="11.5" height="41.4" fill="url(#tg)" stroke="#3aa84a" stroke-width="1"/><rect x="1633.7" y="937.6" width="11.5" height="36.8" fill="url(#tg)" stroke="#3aa84a" stroke-width="1"/><rect x="1656.7" y="896.4" width="11.5" height="78.0" fill="url(#tr)" stroke="#e27a62" stroke-width="1"/><rect x="1679.7" y="886.5" width="11.5" height="87.9" fill="url(#tr)" stroke="#e27a62" stroke-width="1"/><rect x="1702.7" y="847.7" width="11.5" height="126.7" fill="url(#tr)" stroke="#e27a62" stroke-width="1"/><rect x="1725.7" y="904.3" width="11.5" height="70.1" fill="url(#tr)" stroke="#e27a62" stroke-width="1"/><rect x="1748.7" y="935.8" width="11.5" height="38.6" fill="url(#tr)" stroke="#e27a62" stroke-width="1"/><rect x="1771.7" y="932.2" width="11.5" height="42.2" fill="url(#tr)" stroke="#e27a62" stroke-width="1"/><rect x="1794.7" y="916.7" width="11.5" height="57.7" fill="url(#tr)" stroke="#e27a62" stroke-width="1"/><rect x="1817.7" y="943.4" width="11.5" height="31.0" fill="url(#tr)" stroke="#e27a62" stroke-width="1"/><rect x="1840.7" y="959.9" width="11.5" height="14.5" fill="url(#tr)" stroke="#e27a62" stroke-width="1"/><line x1="1937" y1="847.4" x2="2482" y2="847.4" stroke="#b4b4b4" stroke-width="1.3"/><line x1="1937" y1="863.3" x2="2482" y2="863.3" stroke="#b4b4b4" stroke-width="1.3"/><line x1="1937" y1="879.1" x2="2482" y2="879.1" stroke="#b4b4b4" stroke-width="1.3"/><line x1="1937" y1="895.0" x2="2482" y2="895.0" stroke="#b4b4b4" stroke-width="1.3"/><line x1="1937" y1="910.9" x2="2482" y2="910.9" stroke="#b4b4b4" stroke-width="1.3"/><line x1="1937" y1="926.8" x2="2482" y2="926.8" stroke="#b4b4b4" stroke-width="1.3"/><line x1="1937" y1="942.6" x2="2482" y2="942.6" stroke="#b4b4b4" stroke-width="1.3"/><line x1="1937" y1="958.5" x2="2482" y2="958.5" stroke="#b4b4b4" stroke-width="1.3"/><line x1="1937" y1="974.4" x2="2482" y2="974.4" stroke="#b4b4b4" stroke-width="1.3"/><rect x="1942" y="847.4" width="1.3" height="127.0" fill="#a0a0a0"/><rect x="2038.5" y="880.8" width="38.5" height="93.6" fill="url(#tg2)" stroke="#8ed4ac" stroke-width="1"/><rect x="2115.5" y="866.9" width="38.5" height="107.5" fill="url(#tg2)" stroke="#8ed4ac" stroke-width="1"/><rect x="2192.5" y="866.2" width="38.5" height="108.2" fill="url(#tg2)" stroke="#8ed4ac" stroke-width="1"/><rect x="2269.5" y="848.5" width="38.5" height="125.9" fill="url(#tg2)" stroke="#8ed4ac" stroke-width="1"/><rect x="2346.5" y="871.7" width="38.5" height="102.7" fill="url(#tg2)" stroke="#8ed4ac" stroke-width="1"/><line x1="2574" y1="847.4" x2="3131" y2="847.4" stroke="#b4b4b4" stroke-width="1.3"/><line x1="2574" y1="863.3" x2="3131" y2="863.3" stroke="#b4b4b4" stroke-width="1.3"/><line x1="2574" y1="879.1" x2="3131" y2="879.1" stroke="#b4b4b4" stroke-width="1.3"/><line x1="2574" y1="895.0" x2="3131" y2="895.0" stroke="#b4b4b4" stroke-width="1.3"/><line x1="2574" y1="910.9" x2="3131" y2="910.9" stroke="#b4b4b4" stroke-width="1.3"/><line x1="2574" y1="926.8" x2="3131" y2="926.8" stroke="#b4b4b4" stroke-width="1.3"/><line x1="2574" y1="942.6" x2="3131" y2="942.6" stroke="#b4b4b4" stroke-width="1.3"/><line x1="2574" y1="958.5" x2="3131" y2="958.5" stroke="#b4b4b4" stroke-width="1.3"/><line x1="2574" y1="974.4" x2="3131" y2="974.4" stroke="#b4b4b4" stroke-width="1.3"/><rect x="2578" y="847.4" width="1.3" height="127.0" fill="#a0a0a0"/><rect x="2589.0" y="890.1" width="23.6" height="84.3" fill="url(#tb)" stroke="#5ab9da" stroke-width="1"/><rect x="2635.1" y="923.2" width="23.6" height="51.2" fill="url(#tb)" stroke="#5ab9da" stroke-width="1"/><rect x="2681.1" y="847.4" width="23.6" height="127.0" fill="url(#tb)" stroke="#5ab9da" stroke-width="1"/><rect x="2727.2" y="894.7" width="23.6" height="79.7" fill="url(#tb)" stroke="#5ab9da" stroke-width="1"/><rect x="2773.2" y="899.7" width="23.6" height="74.7" fill="url(#tb)" stroke="#5ab9da" stroke-width="1"/><rect x="2819.2" y="919.2" width="23.6" height="55.2" fill="url(#tb)" stroke="#5ab9da" stroke-width="1"/><rect x="2865.3" y="917.8" width="23.6" height="56.6" fill="url(#tb)" stroke="#5ab9da" stroke-width="1"/><rect x="2911.3" y="919.0" width="23.6" height="55.4" fill="url(#tb)" stroke="#5ab9da" stroke-width="1"/><rect x="2957.4" y="894.9" width="23.6" height="79.5" fill="url(#tb)" stroke="#5ab9da" stroke-width="1"/><rect x="3003.4" y="919.2" width="23.6" height="55.2" fill="url(#tb)" stroke="#5ab9da" stroke-width="1"/><rect x="3049.5" y="901.1" width="23.6" height="73.3" fill="url(#tb)" stroke="#5ab9da" stroke-width="1"/><rect x="3095.6" y="931.9" width="23.6" height="42.5" fill="url(#tb)" stroke="#5ab9da" stroke-width="1"/><rect x="1264" y="976" width="1896" height="4" fill="#ebebeb"/><rect x="1263" y="974.5" width="222.5" height="1.5" fill="#000"/><rect x="1545" y="974.5" width="1615" height="1.5" fill="#000"/><rect x="1485" y="974.5" width="1.5" height="6" fill="#000"/><rect x="1545" y="974.5" width="1.5" height="6" fill="#000"/><rect x="1486.5" y="976" width="58.5" height="4" fill="#fff"/><rect x="1321" y="978" width="1" height="2" fill="#333"/><rect x="1401" y="978" width="1" height="2" fill="#333"/><rect x="1607" y="978" width="1" height="2" fill="#333"/><rect x="1702" y="978" width="1" height="2" fill="#333"/><rect x="1762" y="978" width="1" height="2" fill="#333"/><rect x="3082" y="977" width="78" height="3" fill="#7ac84a"/></svg>
<div class="t" style="font-size:12px;line-height:17px;top:829.5px;color:#111;left:1305.3px;transform:scaleX(1.0104);transform-origin:0 50%;">Входы по часам (Азия, Европа, США)</div>
<div class="t" style="font-size:12px;line-height:17px;top:829.5px;color:#111;left:1941.0px;transform:scaleX(1.0212);transform-origin:0 50%;">Входы по дням недели</div>
<div class="t" style="font-size:12px;line-height:17px;top:829.5px;color:#111;left:2577.0px;transform:scaleX(1.0306);transform-origin:0 50%;">Входы по месяцам</div>
<div class="t" style="font-size:10px;line-height:15px;top:839.9px;color:#111;right:1865.0px;transform:scaleX(0.9000);transform-origin:100% 50%;">500</div>
<div class="t" style="font-size:10px;line-height:15px;top:871.7px;color:#111;right:1865.0px;transform:scaleX(0.9000);transform-origin:100% 50%;">375</div>
<div class="t" style="font-size:10px;line-height:15px;top:903.4px;color:#111;right:1865.0px;transform:scaleX(0.9000);transform-origin:100% 50%;">250</div>
<div class="t" style="font-size:10px;line-height:15px;top:935.2px;color:#111;right:1865.0px;transform:scaleX(0.9000);transform-origin:100% 50%;">125</div>
<div class="t" style="font-size:10px;line-height:15px;top:966.9px;color:#111;right:1865.0px;transform:scaleX(0.9000);transform-origin:100% 50%;">0</div>
<div class="t" style="font-size:10px;line-height:15px;top:839.9px;color:#111;right:1229.2px;transform:scaleX(0.9000);transform-origin:100% 50%;">950</div>
<div class="t" style="font-size:10px;line-height:15px;top:903.4px;color:#111;right:1229.2px;transform:scaleX(0.9000);transform-origin:100% 50%;">475</div>
<div class="t" style="font-size:10px;line-height:15px;top:966.9px;color:#111;right:1229.2px;transform:scaleX(0.9000);transform-origin:100% 50%;">0</div>
<div class="t" style="font-size:10px;line-height:15px;top:839.9px;color:#111;right:593.0px;transform:scaleX(0.9000);transform-origin:100% 50%;">610</div>
<div class="t" style="font-size:10px;line-height:15px;top:903.4px;color:#111;right:593.0px;transform:scaleX(0.9000);transform-origin:100% 50%;">305</div>
<div class="t" style="font-size:10px;line-height:15px;top:966.9px;color:#111;right:593.0px;transform:scaleX(0.9000);transform-origin:100% 50%;">0</div>
</body></html>
